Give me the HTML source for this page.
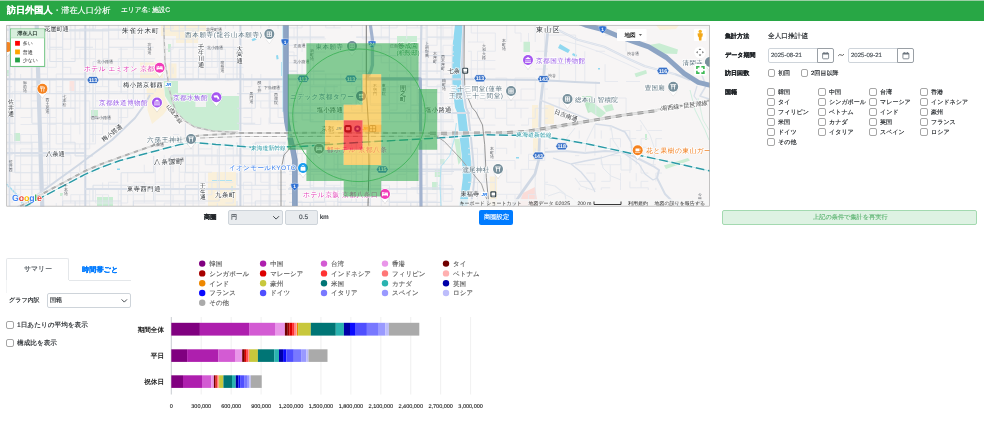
<!DOCTYPE html>
<html lang="ja"><head><meta charset="utf-8"><title>訪日外国人・滞在人口分析</title>
<style>
html,body{margin:0;padding:0;background:#fff;}
body{text-rendering:geometricPrecision;width:984px;height:440px;overflow:hidden;position:relative;font-family:"Liberation Sans",sans-serif;color:#212529;}
.a{position:absolute;white-space:nowrap;will-change:transform;-webkit-text-stroke:0.15px currentColor;}
.cb{position:absolute;width:7.5px;height:7.5px;box-sizing:border-box;border:1px solid #a6a6a6;border-radius:2px;background:#fff;}
.box{position:absolute;box-sizing:border-box;}
svg{position:absolute;left:0;top:0;will-change:transform;}
svg text{font-family:"Liberation Sans",sans-serif;}
</style></head>
<body>
<div class="box" style="left:0;top:0;width:984px;height:20.5px;background:#28a745;"></div>
<div class="box" style="left:0;top:0;width:984px;height:1px;background:#9ccfa6;"></div>
<div class="a" style="left:6.60px;top:6.30px;font-size:9.1px;line-height:9.1px;color:#fff;font-weight:bold;">訪日外国人</div>
<div class="a" style="left:52.50px;top:6.95px;font-size:8.2px;line-height:8.2px;color:#fff;font-weight:normal;">・滞在人口分析</div>
<div class="a" style="left:121.00px;top:7.90px;font-size:6.7px;line-height:6.7px;color:#fff;font-weight:normal;">エリア名: 施設C</div>
<svg width="984" height="440" viewBox="0 0 984 440">
<defs><clipPath id="mc"><rect x="6.5" y="25" width="703.2" height="181.4"/></clipPath></defs>
<g clip-path="url(#mc)">
<rect x="6.5" y="25" width="703.2" height="181.4" fill="#f7f5f5"/>
<path d="M161.0 25.0 L206.0 25.0 L206.0 34.0 L198.0 34.0 L198.0 43.0 L176.0 43.0 L176.0 36.0 L161.0 36.0Z" fill="#faf0da" />
<path d="M140.0 62.5 L163.0 62.5 L163.0 78.0 L140.0 78.0Z" fill="#faf0da" />
<path d="M168.6 63.4 L176.5 63.4 L176.5 78.5 L168.6 78.5Z" fill="#faf0da" />
<path d="M146.5 88.0 L163.7 88.0 L165.0 98.0 L169.0 107.0 L163.0 115.0 L152.0 124.0 L147.5 110.0Z" fill="#faf0da" />
<path d="M208.0 172.0 L236.0 172.0 L236.0 206.0 L208.0 206.0Z" fill="#faf0da" />
<path d="M544.0 105.0 L554.0 105.0 L554.0 124.0 L544.0 124.0Z" fill="#faf0da" />
<path d="M532.0 105.0 L538.0 105.0 L538.0 132.0 L532.0 132.0Z" fill="#faf0da" />
<path d="M533.0 136.0 L538.0 136.0 L538.0 160.0 L533.0 160.0Z" fill="#faf0da" />
<path d="M489.7 176.6 L497.0 176.6 L497.0 206.0 L489.7 206.0Z" fill="#faf0da" />
<path d="M656.0 25.0 L679.0 25.0 L676.0 29.0 L660.0 30.0Z" fill="#faf0da" />
<path d="M523.0 193.0 L535.0 187.0 L538.0 206.0 L518.0 206.0Z" fill="#fbdcd8" />
<rect x="69.5" y="81" width="5.0" height="10.0" fill="#fbe3df"/>
<path d="M163.7 81.0 L178.0 81.0 L178.0 93.0 L222.0 93.0 L222.0 96.0 L239.0 96.0 L239.0 130.0 L215.0 131.0 L195.0 127.0 L182.0 118.0 L176.0 112.0 L170.0 104.0 L165.0 96.0Z" fill="#c9edd3" />
<rect x="195.4" y="100" width="10.6" height="7.0" fill="#f1f3f1"/>
<path d="M397.0 36.0 L417.0 36.0 L417.0 50.0 L397.0 50.0Z" fill="#c9edd3" />
<path d="M523.5 41.7 L530.0 41.7 L530.0 52.0 L523.5 52.0Z" fill="#c9edd3" />
<path d="M648.7 45.0 L659.3 43.3 L678.0 49.5 L677.0 54.0 L663.0 53.6 L652.0 50.0Z" fill="#c9edd3" />
<path d="M634.5 73.4 L646.0 69.9 L647.0 73.4 L636.0 77.3Z" fill="#c9edd3" />
<path d="M582.0 96.0 L592.0 96.0 L597.0 110.0 L588.0 113.0Z" fill="#bfe8c8" />
<path d="M591.0 101.0 L606.0 113.0 L600.0 118.0 L588.0 110.0Z" fill="#c9edd3" />
<path d="M663.9 165.5 L688.0 157.9 L690.0 160.5 L666.0 169.0Z" fill="#c9edd3" />
<path d="M603.0 106.0 L612.0 104.0 L614.0 110.0 L606.0 112.0Z" fill="#c9edd3" />
<rect x="14" y="133" width="6.0" height="8.0" fill="#c9edd3"/>
<rect x="91" y="110" width="7.0" height="6.0" fill="#c9edd3"/>
<rect x="97" y="197" width="16.0" height="9.0" fill="#c9edd3"/>
<rect x="434.8" y="169.5" width="6.2" height="7.5" fill="#c9edd3"/>
<path d="M454.0 139.0 L459.6 139.0 L461.6 160.0 L458.5 165.0 L456.0 150.0Z" fill="#c9edd3" />
<rect x="432" y="182" width="6.0" height="8.0" fill="#c9edd3"/>
<rect x="7" y="70" width="3.0" height="6.0" fill="#c9edd3"/>
<rect x="168" y="44" width="3.0" height="8.0" fill="#c9edd3"/>
<rect x="60" y="193" width="3.0" height="3.0" fill="#c9edd3"/>
<rect x="645" y="134" width="2.0" height="6.0" fill="#c9edd3"/>
<rect x="440" y="159" width="4.4" height="5.4" fill="#c9edd3"/>
<path d="M455.0 25.0 L452.8 43.4 L451.8 64.7 L452.2 86.0 L455.0 107.5 L457.0 112.0 L459.2 133.8 L461.8 155.6 L462.9 177.5 L460.7 195.0 L459.2 206.0 L467.3 206.0 L468.4 195.0 L472.3 177.5 L470.5 155.6 L468.4 133.8 L465.7 112.0 L464.0 107.5 L461.4 86.0 L460.3 64.7 L461.4 43.4 L462.4 25.0Z" fill="#90d8f0" />
<path d="M6.5 184.0 L19.5 197.5 L24.0 207.0" fill="none" stroke="#9adcf2" stroke-width="1.6" stroke-linejoin="round" />
<path d="M251.5 39.2 L255.5 37.6 L256.5 39.8 L252.5 41.2Z" fill="#90d8f0" />
<path d="M276.0 55.5 L278.0 55.0 L278.6 59.0 L276.6 59.6Z" fill="#90d8f0" />
<path d="M281.5 62.0 L281.5 76.0" fill="none" stroke="#a5e0f3" stroke-width="0.8" stroke-linejoin="round" />
<path d="M560.0 44.0 L570.0 50.0 L568.0 53.0 L558.0 48.0Z" fill="#90d8f0" />
<path d="M573.0 53.0 L577.0 55.0 L576.0 57.0 L572.0 55.0Z" fill="#90d8f0" />
<rect x="117" y="168.5" width="3.0" height="1.5" fill="#90d8f0"/>
<rect x="516" y="157" width="3.0" height="1.5" fill="#90d8f0"/>
<rect x="598" y="68" width="2.0" height="1.5" fill="#90d8f0"/>
<path d="M212.0 180.5 L232.0 180.5" fill="none" stroke="#a5e0f3" stroke-width="0.9" stroke-linejoin="round" />
<path d="M232.0 186.0 L232.0 196.0 L228.0 196.0" fill="none" stroke="#a5e0f3" stroke-width="0.8" stroke-linejoin="round" />
<path d="M12.1 91.9L12.1 100.9M12.1 108.0L12.1 117.5M12.1 117.5L12.1 124.5M12.1 134.5L12.1 143.9M12.1 148.9L12.1 154.9M12.1 164.7L12.1 172.2M12.1 189.4L12.1 194.7M12.1 194.7L12.1 203.0M20.6 25.0L20.6 28.8M20.6 74.0L20.6 80.1M20.6 91.9L20.6 100.9M20.6 100.9L20.6 108.0M20.6 134.5L20.6 143.9M20.6 148.9L20.6 154.9M20.6 154.9L20.6 164.7M20.6 164.7L20.6 172.2M20.6 172.2L20.6 182.3M20.6 182.3L20.6 189.4M20.6 189.4L20.6 194.7M20.6 194.7L20.6 203.0M31.2 67.4L31.2 74.0M31.2 74.0L31.2 80.1M31.2 86.6L31.2 91.9M31.2 91.9L31.2 100.9M31.2 100.9L31.2 108.0M31.2 108.0L31.2 117.5M31.2 134.5L31.2 143.9M31.2 148.9L31.2 154.9M31.2 164.7L31.2 172.2M31.2 172.2L31.2 182.3M39.2 67.4L39.2 74.0M39.2 91.9L39.2 100.9M39.2 117.5L39.2 124.5M39.2 124.5L39.2 134.5M39.2 143.9L39.2 148.9M39.2 148.9L39.2 154.9M39.2 154.9L39.2 164.7M39.2 164.7L39.2 172.2M39.2 172.2L39.2 182.3M39.2 182.3L39.2 189.4M47.5 25.0L47.5 28.8M47.5 28.8L47.5 39.0M47.5 39.0L47.5 49.2M47.5 58.7L47.5 67.4M47.5 67.4L47.5 74.0M47.5 74.0L47.5 80.1M47.5 86.6L47.5 91.9M47.5 100.9L47.5 108.0M47.5 108.0L47.5 117.5M47.5 117.5L47.5 124.5M47.5 124.5L47.5 134.5M47.5 134.5L47.5 143.9M47.5 143.9L47.5 148.9M47.5 148.9L47.5 154.9M47.5 154.9L47.5 164.7M47.5 164.7L47.5 172.2M47.5 172.2L47.5 182.3M47.5 182.3L47.5 189.4M56.2 25.0L56.2 28.8M56.2 28.8L56.2 39.0M56.2 39.0L56.2 49.2M56.2 49.2L56.2 58.7M56.2 58.7L56.2 67.4M56.2 74.0L56.2 80.1M56.2 80.1L56.2 86.6M56.2 86.6L56.2 91.9M56.2 91.9L56.2 100.9M56.2 100.9L56.2 108.0M56.2 108.0L56.2 117.5M56.2 117.5L56.2 124.5M56.2 124.5L56.2 134.5M56.2 134.5L56.2 143.9M56.2 148.9L56.2 154.9M56.2 164.7L56.2 172.2M56.2 172.2L56.2 182.3M56.2 203.0L56.2 206.0M62.6 25.0L62.6 28.8M62.6 58.7L62.6 67.4M62.6 80.1L62.6 86.6M62.6 86.6L62.6 91.9M62.6 91.9L62.6 100.9M62.6 100.9L62.6 108.0M62.6 108.0L62.6 117.5M62.6 117.5L62.6 124.5M62.6 134.5L62.6 143.9M62.6 143.9L62.6 148.9M62.6 148.9L62.6 154.9M62.6 154.9L62.6 164.7M62.6 164.7L62.6 172.2M62.6 172.2L62.6 182.3M62.6 194.7L62.6 203.0M62.6 203.0L62.6 206.0M70.8 25.0L70.8 28.8M70.8 28.8L70.8 39.0M70.8 39.0L70.8 49.2M70.8 67.4L70.8 74.0M70.8 86.6L70.8 91.9M70.8 91.9L70.8 100.9M70.8 100.9L70.8 108.0M70.8 117.5L70.8 124.5M70.8 124.5L70.8 134.5M70.8 134.5L70.8 143.9M70.8 154.9L70.8 164.7M70.8 172.2L70.8 182.3M70.8 194.7L70.8 203.0M79.8 28.8L79.8 39.0M79.8 49.2L79.8 58.7M79.8 80.1L79.8 86.6M79.8 86.6L79.8 91.9M79.8 91.9L79.8 100.9M79.8 100.9L79.8 108.0M79.8 108.0L79.8 117.5M79.8 117.5L79.8 124.5M79.8 124.5L79.8 134.5M79.8 143.9L79.8 148.9M79.8 164.7L79.8 172.2M79.8 194.7L79.8 203.0M79.8 203.0L79.8 206.0M89.7 25.0L89.7 28.8M89.7 28.8L89.7 39.0M89.7 39.0L89.7 49.2M89.7 49.2L89.7 58.7M89.7 58.7L89.7 67.4M89.7 67.4L89.7 74.0M89.7 80.1L89.7 86.6M89.7 86.6L89.7 91.9M89.7 100.9L89.7 108.0M89.7 108.0L89.7 117.5M89.7 117.5L89.7 124.5M89.7 124.5L89.7 134.5M89.7 134.5L89.7 143.9M89.7 143.9L89.7 148.9M89.7 189.4L89.7 194.7M89.7 194.7L89.7 203.0M89.7 203.0L89.7 206.0M95.5 25.0L95.5 28.8M95.5 39.0L95.5 49.2M95.5 49.2L95.5 58.7M95.5 58.7L95.5 67.4M95.5 67.4L95.5 74.0M95.5 74.0L95.5 80.1M95.5 80.1L95.5 86.6M95.5 86.6L95.5 91.9M95.5 91.9L95.5 100.9M95.5 100.9L95.5 108.0M95.5 117.5L95.5 124.5M95.5 124.5L95.5 134.5M95.5 134.5L95.5 143.9M95.5 189.4L95.5 194.7M95.5 194.7L95.5 203.0M102.6 28.8L102.6 39.0M102.6 39.0L102.6 49.2M102.6 49.2L102.6 58.7M102.6 58.7L102.6 67.4M102.6 67.4L102.6 74.0M102.6 74.0L102.6 80.1M102.6 80.1L102.6 86.6M102.6 100.9L102.6 108.0M102.6 117.5L102.6 124.5M102.6 124.5L102.6 134.5M102.6 182.3L102.6 189.4M102.6 194.7L102.6 203.0M102.6 203.0L102.6 206.0M108.5 25.0L108.5 28.8M108.5 28.8L108.5 39.0M108.5 49.2L108.5 58.7M108.5 58.7L108.5 67.4M108.5 67.4L108.5 74.0M108.5 80.1L108.5 86.6M108.5 86.6L108.5 91.9M108.5 91.9L108.5 100.9M108.5 100.9L108.5 108.0M108.5 108.0L108.5 117.5M108.5 117.5L108.5 124.5M108.5 124.5L108.5 134.5M108.5 182.3L108.5 189.4M108.5 194.7L108.5 203.0M108.5 203.0L108.5 206.0M118.4 25.0L118.4 28.8M118.4 28.8L118.4 39.0M118.4 58.7L118.4 67.4M118.4 67.4L118.4 74.0M118.4 80.1L118.4 86.6M118.4 108.0L118.4 117.5M118.4 117.5L118.4 124.5M118.4 189.4L118.4 194.7M118.4 194.7L118.4 203.0M118.4 203.0L118.4 206.0M127.7 25.0L127.7 28.8M127.7 28.8L127.7 39.0M127.7 58.7L127.7 67.4M127.7 67.4L127.7 74.0M127.7 74.0L127.7 80.1M127.7 80.1L127.7 86.6M127.7 86.6L127.7 91.9M127.7 91.9L127.7 100.9M127.7 108.0L127.7 117.5M127.7 172.2L127.7 182.3M127.7 194.7L127.7 203.0M133.3 28.8L133.3 39.0M133.3 39.0L133.3 49.2M133.3 49.2L133.3 58.7M133.3 67.4L133.3 74.0M133.3 74.0L133.3 80.1M133.3 91.9L133.3 100.9M133.3 100.9L133.3 108.0M133.3 189.4L133.3 194.7M133.3 194.7L133.3 203.0M133.3 203.0L133.3 206.0M144.3 49.2L144.3 58.7M144.3 58.7L144.3 67.4M144.3 67.4L144.3 74.0M144.3 86.6L144.3 91.9M144.3 91.9L144.3 100.9M144.3 164.7L144.3 172.2M144.3 182.3L144.3 189.4M144.3 189.4L144.3 194.7M144.3 194.7L144.3 203.0M155.2 80.1L155.2 86.6M155.2 86.6L155.2 91.9M155.2 164.7L155.2 172.2M155.2 172.2L155.2 182.3M155.2 182.3L155.2 189.4M155.2 189.4L155.2 194.7M155.2 194.7L155.2 203.0M155.2 203.0L155.2 206.0M164.2 25.0L164.2 28.8M164.2 28.8L164.2 39.0M164.2 49.2L164.2 58.7M164.2 58.7L164.2 67.4M164.2 74.0L164.2 80.1M164.2 154.9L164.2 164.7M164.2 164.7L164.2 172.2M164.2 172.2L164.2 182.3M164.2 182.3L164.2 189.4M164.2 189.4L164.2 194.7M164.2 203.0L164.2 206.0M173.1 25.0L173.1 28.8M173.1 39.0L173.1 49.2M173.1 67.4L173.1 74.0M173.1 154.9L173.1 164.7M173.1 164.7L173.1 172.2M173.1 182.3L173.1 189.4M173.1 194.7L173.1 203.0M179.3 25.0L179.3 28.8M179.3 28.8L179.3 39.0M179.3 49.2L179.3 58.7M179.3 58.7L179.3 67.4M179.3 67.4L179.3 74.0M179.3 74.0L179.3 80.1M179.3 164.7L179.3 172.2M179.3 172.2L179.3 182.3M179.3 182.3L179.3 189.4M179.3 189.4L179.3 194.7M179.3 203.0L179.3 206.0M184.8 25.0L184.8 28.8M184.8 39.0L184.8 49.2M184.8 49.2L184.8 58.7M184.8 58.7L184.8 67.4M184.8 67.4L184.8 74.0M184.8 148.9L184.8 154.9M184.8 172.2L184.8 182.3M184.8 189.4L184.8 194.7M184.8 194.7L184.8 203.0M184.8 203.0L184.8 206.0M193.1 28.8L193.1 39.0M193.1 39.0L193.1 49.2M193.1 49.2L193.1 58.7M193.1 58.7L193.1 67.4M193.1 67.4L193.1 74.0M193.1 74.0L193.1 80.1M193.1 143.9L193.1 148.9M193.1 148.9L193.1 154.9M193.1 154.9L193.1 164.7M193.1 164.7L193.1 172.2M193.1 172.2L193.1 182.3M193.1 194.7L193.1 203.0M193.1 203.0L193.1 206.0M198.8 25.0L198.8 28.8M198.8 58.7L198.8 67.4M198.8 67.4L198.8 74.0M198.8 148.9L198.8 154.9M198.8 154.9L198.8 164.7M198.8 164.7L198.8 172.2M198.8 189.4L198.8 194.7M198.8 194.7L198.8 203.0M198.8 203.0L198.8 206.0M205.2 49.2L205.2 58.7M205.2 58.7L205.2 67.4M205.2 67.4L205.2 74.0M205.2 74.0L205.2 80.1M205.2 154.9L205.2 164.7M205.2 172.2L205.2 182.3M211.9 25.0L211.9 28.8M211.9 49.2L211.9 58.7M211.9 58.7L211.9 67.4M211.9 143.9L211.9 148.9M211.9 148.9L211.9 154.9M211.9 154.9L211.9 164.7M211.9 182.3L211.9 189.4M211.9 189.4L211.9 194.7M217.4 25.0L217.4 28.8M217.4 39.0L217.4 49.2M217.4 49.2L217.4 58.7M217.4 58.7L217.4 67.4M217.4 74.0L217.4 80.1M217.4 148.9L217.4 154.9M217.4 154.9L217.4 164.7M217.4 172.2L217.4 182.3M217.4 182.3L217.4 189.4M217.4 189.4L217.4 194.7M217.4 203.0L217.4 206.0M225.4 25.0L225.4 28.8M225.4 49.2L225.4 58.7M225.4 58.7L225.4 67.4M225.4 74.0L225.4 80.1M225.4 143.9L225.4 148.9M225.4 148.9L225.4 154.9M225.4 154.9L225.4 164.7M225.4 164.7L225.4 172.2M225.4 172.2L225.4 182.3M233.3 25.0L233.3 28.8M233.3 39.0L233.3 49.2M233.3 49.2L233.3 58.7M233.3 58.7L233.3 67.4M233.3 67.4L233.3 74.0M233.3 74.0L233.3 80.1M233.3 143.9L233.3 148.9M233.3 148.9L233.3 154.9M233.3 154.9L233.3 164.7M233.3 194.7L233.3 203.0M243.4 74.0L243.4 80.1M243.4 80.1L243.4 86.6M243.4 86.6L243.4 91.9M243.4 143.9L243.4 148.9M243.4 182.3L243.4 189.4M243.4 194.7L243.4 203.0M243.4 203.0L243.4 206.0M251.8 25.0L251.8 28.8M251.8 74.0L251.8 80.1M251.8 80.1L251.8 86.6M251.8 100.9L251.8 108.0M251.8 108.0L251.8 117.5M251.8 117.5L251.8 124.5M251.8 148.9L251.8 154.9M251.8 154.9L251.8 164.7M251.8 182.3L251.8 189.4M251.8 189.4L251.8 194.7M251.8 194.7L251.8 203.0M251.8 203.0L251.8 206.0M260.8 25.0L260.8 28.8M260.8 74.0L260.8 80.1M260.8 80.1L260.8 86.6M260.8 86.6L260.8 91.9M260.8 100.9L260.8 108.0M260.8 117.5L260.8 124.5M260.8 143.9L260.8 148.9M260.8 148.9L260.8 154.9M260.8 172.2L260.8 182.3M260.8 189.4L260.8 194.7M260.8 194.7L260.8 203.0M260.8 203.0L260.8 206.0M269.0 25.0L269.0 28.8M269.0 80.1L269.0 86.6M269.0 91.9L269.0 100.9M269.0 100.9L269.0 108.0M269.0 117.5L269.0 124.5M269.0 154.9L269.0 164.7M269.0 164.7L269.0 172.2M269.0 172.2L269.0 182.3M269.0 182.3L269.0 189.4M269.0 194.7L269.0 203.0M269.0 203.0L269.0 206.0M278.1 25.0L278.1 28.8M278.1 80.1L278.1 86.6M278.1 86.6L278.1 91.9M278.1 100.9L278.1 108.0M278.1 108.0L278.1 117.5M278.1 143.9L278.1 148.9M278.1 148.9L278.1 154.9M278.1 164.7L278.1 172.2M278.1 172.2L278.1 182.3M278.1 182.3L278.1 189.4M278.1 203.0L278.1 206.0M7.0 28.8L12.1 28.8M47.5 28.8L56.2 28.8M79.8 28.8L89.7 28.8M89.7 28.8L95.5 28.8M102.6 28.8L108.5 28.8M108.5 28.8L118.4 28.8M118.4 28.8L127.7 28.8M164.2 28.8L173.1 28.8M179.3 28.8L184.8 28.8M184.8 28.8L193.1 28.8M193.1 28.8L198.8 28.8M198.8 28.8L205.2 28.8M7.0 39.0L12.1 39.0M47.5 39.0L56.2 39.0M62.6 39.0L70.8 39.0M70.8 39.0L79.8 39.0M79.8 39.0L89.7 39.0M89.7 39.0L95.5 39.0M95.5 39.0L102.6 39.0M108.5 39.0L118.4 39.0M118.4 39.0L127.7 39.0M127.7 39.0L133.3 39.0M133.3 39.0L144.3 39.0M144.3 39.0L155.2 39.0M164.2 39.0L173.1 39.0M173.1 39.0L179.3 39.0M179.3 39.0L184.8 39.0M184.8 39.0L193.1 39.0M193.1 39.0L198.8 39.0M7.0 49.2L12.1 49.2M47.5 49.2L56.2 49.2M56.2 49.2L62.6 49.2M62.6 49.2L70.8 49.2M79.8 49.2L89.7 49.2M89.7 49.2L95.5 49.2M95.5 49.2L102.6 49.2M102.6 49.2L108.5 49.2M118.4 49.2L127.7 49.2M133.3 49.2L144.3 49.2M164.2 49.2L173.1 49.2M179.3 49.2L184.8 49.2M205.2 49.2L211.9 49.2M211.9 49.2L217.4 49.2M217.4 49.2L225.4 49.2M233.3 49.2L243.4 49.2M56.2 58.7L62.6 58.7M70.8 58.7L79.8 58.7M79.8 58.7L89.7 58.7M89.7 58.7L95.5 58.7M102.6 58.7L108.5 58.7M118.4 58.7L127.7 58.7M127.7 58.7L133.3 58.7M133.3 58.7L144.3 58.7M144.3 58.7L155.2 58.7M164.2 58.7L173.1 58.7M173.1 58.7L179.3 58.7M179.3 58.7L184.8 58.7M184.8 58.7L193.1 58.7M193.1 58.7L198.8 58.7M198.8 58.7L205.2 58.7M205.2 58.7L211.9 58.7M211.9 58.7L217.4 58.7M217.4 58.7L225.4 58.7M225.4 58.7L233.3 58.7M233.3 58.7L243.4 58.7M12.1 67.4L20.6 67.4M20.6 67.4L31.2 67.4M31.2 67.4L39.2 67.4M39.2 67.4L47.5 67.4M47.5 67.4L56.2 67.4M62.6 67.4L70.8 67.4M89.7 67.4L95.5 67.4M95.5 67.4L102.6 67.4M102.6 67.4L108.5 67.4M118.4 67.4L127.7 67.4M127.7 67.4L133.3 67.4M179.3 67.4L184.8 67.4M184.8 67.4L193.1 67.4M193.1 67.4L198.8 67.4M198.8 67.4L205.2 67.4M205.2 67.4L211.9 67.4M211.9 67.4L217.4 67.4M225.4 67.4L233.3 67.4M233.3 67.4L243.4 67.4M7.0 74.0L12.1 74.0M39.2 74.0L47.5 74.0M56.2 74.0L62.6 74.0M62.6 74.0L70.8 74.0M70.8 74.0L79.8 74.0M79.8 74.0L89.7 74.0M89.7 74.0L95.5 74.0M108.5 74.0L118.4 74.0M127.7 74.0L133.3 74.0M133.3 74.0L144.3 74.0M144.3 74.0L155.2 74.0M179.3 74.0L184.8 74.0M184.8 74.0L193.1 74.0M198.8 74.0L205.2 74.0M205.2 74.0L211.9 74.0M211.9 74.0L217.4 74.0M225.4 74.0L233.3 74.0M233.3 74.0L243.4 74.0M12.1 80.1L20.6 80.1M31.2 80.1L39.2 80.1M39.2 80.1L47.5 80.1M47.5 80.1L56.2 80.1M62.6 80.1L70.8 80.1M70.8 80.1L79.8 80.1M79.8 80.1L89.7 80.1M108.5 80.1L118.4 80.1M144.3 80.1L155.2 80.1M155.2 80.1L164.2 80.1M173.1 80.1L179.3 80.1M179.3 80.1L184.8 80.1M184.8 80.1L193.1 80.1M205.2 80.1L211.9 80.1M211.9 80.1L217.4 80.1M225.4 80.1L233.3 80.1M243.4 80.1L251.8 80.1M251.8 80.1L260.8 80.1M260.8 80.1L269.0 80.1M269.0 80.1L278.1 80.1M7.0 86.6L12.1 86.6M31.2 86.6L39.2 86.6M56.2 86.6L62.6 86.6M79.8 86.6L89.7 86.6M95.5 86.6L102.6 86.6M102.6 86.6L108.5 86.6M118.4 86.6L127.7 86.6M127.7 86.6L133.3 86.6M133.3 86.6L144.3 86.6M144.3 86.6L155.2 86.6M155.2 86.6L164.2 86.6M243.4 86.6L251.8 86.6M260.8 86.6L269.0 86.6M278.1 86.6L286.0 86.6M12.1 91.9L20.6 91.9M20.6 91.9L31.2 91.9M31.2 91.9L39.2 91.9M39.2 91.9L47.5 91.9M56.2 91.9L62.6 91.9M70.8 91.9L79.8 91.9M79.8 91.9L89.7 91.9M95.5 91.9L102.6 91.9M102.6 91.9L108.5 91.9M108.5 91.9L118.4 91.9M118.4 91.9L127.7 91.9M269.0 91.9L278.1 91.9M278.1 91.9L286.0 91.9M12.1 100.9L20.6 100.9M31.2 100.9L39.2 100.9M62.6 100.9L70.8 100.9M70.8 100.9L79.8 100.9M79.8 100.9L89.7 100.9M95.5 100.9L102.6 100.9M102.6 100.9L108.5 100.9M118.4 100.9L127.7 100.9M133.3 100.9L144.3 100.9M251.8 100.9L260.8 100.9M260.8 100.9L269.0 100.9M269.0 100.9L278.1 100.9M12.1 108.0L20.6 108.0M31.2 108.0L39.2 108.0M39.2 108.0L47.5 108.0M47.5 108.0L56.2 108.0M56.2 108.0L62.6 108.0M62.6 108.0L70.8 108.0M70.8 108.0L79.8 108.0M89.7 108.0L95.5 108.0M95.5 108.0L102.6 108.0M108.5 108.0L118.4 108.0M118.4 108.0L127.7 108.0M127.7 108.0L133.3 108.0M243.4 108.0L251.8 108.0M260.8 108.0L269.0 108.0M269.0 108.0L278.1 108.0M278.1 108.0L286.0 108.0M7.0 117.5L12.1 117.5M20.6 117.5L31.2 117.5M39.2 117.5L47.5 117.5M47.5 117.5L56.2 117.5M89.7 117.5L95.5 117.5M95.5 117.5L102.6 117.5M102.6 117.5L108.5 117.5M118.4 117.5L127.7 117.5M243.4 117.5L251.8 117.5M278.1 117.5L286.0 117.5M20.6 124.5L31.2 124.5M31.2 124.5L39.2 124.5M47.5 124.5L56.2 124.5M62.6 124.5L70.8 124.5M70.8 124.5L79.8 124.5M102.6 124.5L108.5 124.5M108.5 124.5L118.4 124.5M243.4 124.5L251.8 124.5M251.8 124.5L260.8 124.5M7.0 134.5L12.1 134.5M20.6 134.5L31.2 134.5M31.2 134.5L39.2 134.5M47.5 134.5L56.2 134.5M56.2 134.5L62.6 134.5M62.6 134.5L70.8 134.5M89.7 134.5L95.5 134.5M95.5 134.5L102.6 134.5M173.1 134.5L179.3 134.5M7.0 143.9L12.1 143.9M12.1 143.9L20.6 143.9M20.6 143.9L31.2 143.9M39.2 143.9L47.5 143.9M56.2 143.9L62.6 143.9M62.6 143.9L70.8 143.9M70.8 143.9L79.8 143.9M79.8 143.9L89.7 143.9M89.7 143.9L95.5 143.9M211.9 143.9L217.4 143.9M217.4 143.9L225.4 143.9M251.8 143.9L260.8 143.9M278.1 143.9L286.0 143.9M7.0 148.9L12.1 148.9M20.6 148.9L31.2 148.9M31.2 148.9L39.2 148.9M39.2 148.9L47.5 148.9M47.5 148.9L56.2 148.9M56.2 148.9L62.6 148.9M62.6 148.9L70.8 148.9M70.8 148.9L79.8 148.9M79.8 148.9L89.7 148.9M184.8 148.9L193.1 148.9M198.8 148.9L205.2 148.9M205.2 148.9L211.9 148.9M225.4 148.9L233.3 148.9M243.4 148.9L251.8 148.9M7.0 154.9L12.1 154.9M20.6 154.9L31.2 154.9M31.2 154.9L39.2 154.9M39.2 154.9L47.5 154.9M56.2 154.9L62.6 154.9M62.6 154.9L70.8 154.9M173.1 154.9L179.3 154.9M179.3 154.9L184.8 154.9M184.8 154.9L193.1 154.9M193.1 154.9L198.8 154.9M198.8 154.9L205.2 154.9M205.2 154.9L211.9 154.9M211.9 154.9L217.4 154.9M225.4 154.9L233.3 154.9M233.3 154.9L243.4 154.9M269.0 154.9L278.1 154.9M278.1 154.9L286.0 154.9M7.0 164.7L12.1 164.7M20.6 164.7L31.2 164.7M31.2 164.7L39.2 164.7M39.2 164.7L47.5 164.7M47.5 164.7L56.2 164.7M56.2 164.7L62.6 164.7M62.6 164.7L70.8 164.7M79.8 164.7L89.7 164.7M155.2 164.7L164.2 164.7M164.2 164.7L173.1 164.7M173.1 164.7L179.3 164.7M184.8 164.7L193.1 164.7M193.1 164.7L198.8 164.7M205.2 164.7L211.9 164.7M211.9 164.7L217.4 164.7M217.4 164.7L225.4 164.7M225.4 164.7L233.3 164.7M233.3 164.7L243.4 164.7M243.4 164.7L251.8 164.7M251.8 164.7L260.8 164.7M260.8 164.7L269.0 164.7M12.1 172.2L20.6 172.2M31.2 172.2L39.2 172.2M47.5 172.2L56.2 172.2M62.6 172.2L70.8 172.2M79.8 172.2L89.7 172.2M144.3 172.2L155.2 172.2M179.3 172.2L184.8 172.2M184.8 172.2L193.1 172.2M198.8 172.2L205.2 172.2M205.2 172.2L211.9 172.2M243.4 172.2L251.8 172.2M251.8 172.2L260.8 172.2M260.8 172.2L269.0 172.2M278.1 172.2L286.0 172.2M7.0 182.3L12.1 182.3M12.1 182.3L20.6 182.3M20.6 182.3L31.2 182.3M31.2 182.3L39.2 182.3M39.2 182.3L47.5 182.3M108.5 182.3L118.4 182.3M133.3 182.3L144.3 182.3M155.2 182.3L164.2 182.3M164.2 182.3L173.1 182.3M173.1 182.3L179.3 182.3M179.3 182.3L184.8 182.3M184.8 182.3L193.1 182.3M193.1 182.3L198.8 182.3M198.8 182.3L205.2 182.3M205.2 182.3L211.9 182.3M211.9 182.3L217.4 182.3M225.4 182.3L233.3 182.3M243.4 182.3L251.8 182.3M260.8 182.3L269.0 182.3M278.1 182.3L286.0 182.3M12.1 189.4L20.6 189.4M20.6 189.4L31.2 189.4M31.2 189.4L39.2 189.4M39.2 189.4L47.5 189.4M89.7 189.4L95.5 189.4M102.6 189.4L108.5 189.4M108.5 189.4L118.4 189.4M127.7 189.4L133.3 189.4M133.3 189.4L144.3 189.4M144.3 189.4L155.2 189.4M179.3 189.4L184.8 189.4M184.8 189.4L193.1 189.4M198.8 189.4L205.2 189.4M205.2 189.4L211.9 189.4M217.4 189.4L225.4 189.4M225.4 189.4L233.3 189.4M243.4 189.4L251.8 189.4M251.8 189.4L260.8 189.4M260.8 189.4L269.0 189.4M278.1 189.4L286.0 189.4M7.0 194.7L12.1 194.7M12.1 194.7L20.6 194.7M70.8 194.7L79.8 194.7M79.8 194.7L89.7 194.7M95.5 194.7L102.6 194.7M102.6 194.7L108.5 194.7M118.4 194.7L127.7 194.7M127.7 194.7L133.3 194.7M133.3 194.7L144.3 194.7M155.2 194.7L164.2 194.7M164.2 194.7L173.1 194.7M173.1 194.7L179.3 194.7M179.3 194.7L184.8 194.7M184.8 194.7L193.1 194.7M193.1 194.7L198.8 194.7M205.2 194.7L211.9 194.7M217.4 194.7L225.4 194.7M243.4 194.7L251.8 194.7M260.8 194.7L269.0 194.7M269.0 194.7L278.1 194.7M278.1 194.7L286.0 194.7M62.6 203.0L70.8 203.0M70.8 203.0L79.8 203.0M79.8 203.0L89.7 203.0M95.5 203.0L102.6 203.0M102.6 203.0L108.5 203.0M108.5 203.0L118.4 203.0M118.4 203.0L127.7 203.0M133.3 203.0L144.3 203.0M144.3 203.0L155.2 203.0M164.2 203.0L173.1 203.0M173.1 203.0L179.3 203.0M179.3 203.0L184.8 203.0M184.8 203.0L193.1 203.0M193.1 203.0L198.8 203.0M198.8 203.0L205.2 203.0M225.4 203.0L233.3 203.0M243.4 203.0L251.8 203.0M251.8 203.0L260.8 203.0M260.8 203.0L269.0 203.0M269.0 203.0L278.1 203.0" fill="none" stroke="#e4e8ee" stroke-width="0.9"/>
<path d="M14.9 61.5L14.9 79.4M14.9 79.4L14.9 93.6M14.9 93.6L14.9 108.2M14.9 108.2L14.9 123.3M14.9 123.3L14.9 142.2M14.9 142.2L14.9 155.9M14.9 155.9L14.9 172.7M14.9 185.3L14.9 201.0M31.9 61.5L31.9 79.4M31.9 79.4L31.9 93.6M31.9 108.2L31.9 123.3M31.9 142.2L31.9 155.9M31.9 155.9L31.9 172.7M31.9 172.7L31.9 185.3M31.9 185.3L31.9 201.0M49.8 25.0L49.8 31.0M49.8 31.0L49.8 47.2M49.8 47.2L49.8 61.5M49.8 79.4L49.8 93.6M49.8 108.2L49.8 123.3M49.8 123.3L49.8 142.2M49.8 142.2L49.8 155.9M49.8 155.9L49.8 172.7M49.8 172.7L49.8 185.3M62.7 31.0L62.7 47.2M62.7 47.2L62.7 61.5M62.7 61.5L62.7 79.4M62.7 79.4L62.7 93.6M62.7 93.6L62.7 108.2M62.7 108.2L62.7 123.3M62.7 123.3L62.7 142.2M62.7 142.2L62.7 155.9M62.7 155.9L62.7 172.7M62.7 172.7L62.7 185.3M62.7 201.0L62.7 206.0M75.1 25.0L75.1 31.0M75.1 31.0L75.1 47.2M75.1 47.2L75.1 61.5M75.1 79.4L75.1 93.6M75.1 93.6L75.1 108.2M75.1 108.2L75.1 123.3M75.1 142.2L75.1 155.9M75.1 201.0L75.1 206.0M93.0 25.0L93.0 31.0M93.0 61.5L93.0 79.4M93.0 79.4L93.0 93.6M93.0 93.6L93.0 108.2M93.0 108.2L93.0 123.3M93.0 123.3L93.0 142.2M93.0 185.3L93.0 201.0M108.7 25.0L108.7 31.0M108.7 31.0L108.7 47.2M108.7 47.2L108.7 61.5M108.7 79.4L108.7 93.6M108.7 93.6L108.7 108.2M108.7 108.2L108.7 123.3M108.7 201.0L108.7 206.0M121.1 47.2L121.1 61.5M121.1 61.5L121.1 79.4M121.1 79.4L121.1 93.6M121.1 108.2L121.1 123.3M121.1 172.7L121.1 185.3M121.1 185.3L121.1 201.0M121.1 201.0L121.1 206.0M133.4 31.0L133.4 47.2M133.4 61.5L133.4 79.4M133.4 79.4L133.4 93.6M133.4 93.6L133.4 108.2M133.4 201.0L133.4 206.0M153.7 155.9L153.7 172.7M153.7 185.3L153.7 201.0M170.7 25.0L170.7 31.0M170.7 47.2L170.7 61.5M170.7 61.5L170.7 79.4M170.7 155.9L170.7 172.7M170.7 172.7L170.7 185.3M170.7 185.3L170.7 201.0M170.7 201.0L170.7 206.0M185.4 25.0L185.4 31.0M185.4 31.0L185.4 47.2M185.4 47.2L185.4 61.5M185.4 61.5L185.4 79.4M185.4 123.3L185.4 142.2M185.4 155.9L185.4 172.7M185.4 185.3L185.4 201.0M185.4 201.0L185.4 206.0M198.4 25.0L198.4 31.0M198.4 61.5L198.4 79.4M198.4 142.2L198.4 155.9M198.4 172.7L198.4 185.3M198.4 185.3L198.4 201.0M219.2 47.2L219.2 61.5M219.2 61.5L219.2 79.4M219.2 142.2L219.2 155.9M219.2 155.9L219.2 172.7M219.2 172.7L219.2 185.3M219.2 185.3L219.2 201.0M237.0 47.2L237.0 61.5M237.0 61.5L237.0 79.4M237.0 142.2L237.0 155.9M237.0 172.7L237.0 185.3M237.0 201.0L237.0 206.0M255.3 93.6L255.3 108.2M255.3 142.2L255.3 155.9M255.3 155.9L255.3 172.7M255.3 172.7L255.3 185.3M255.3 201.0L255.3 206.0M270.0 79.4L270.0 93.6M270.0 93.6L270.0 108.2M270.0 108.2L270.0 123.3M270.0 155.9L270.0 172.7M270.0 172.7L270.0 185.3M270.0 185.3L270.0 201.0M270.0 201.0L270.0 206.0M284.1 25.0L284.1 31.0M284.1 31.0L284.1 47.2M284.1 61.5L284.1 79.4M284.1 79.4L284.1 93.6M284.1 142.2L284.1 155.9M284.1 155.9L284.1 172.7M284.1 201.0L284.1 206.0M62.7 31.0L75.1 31.0M75.1 31.0L93.0 31.0M93.0 31.0L108.7 31.0M121.1 31.0L133.4 31.0M133.4 31.0L153.7 31.0M170.7 31.0L185.4 31.0M185.4 31.0L198.4 31.0M284.1 31.0L286.0 31.0M49.8 47.2L62.7 47.2M75.1 47.2L93.0 47.2M108.7 47.2L121.1 47.2M121.1 47.2L133.4 47.2M133.4 47.2L153.7 47.2M170.7 47.2L185.4 47.2M185.4 47.2L198.4 47.2M198.4 47.2L219.2 47.2M219.2 47.2L237.0 47.2M284.1 47.2L286.0 47.2M49.8 61.5L62.7 61.5M62.7 61.5L75.1 61.5M93.0 61.5L108.7 61.5M108.7 61.5L121.1 61.5M121.1 61.5L133.4 61.5M133.4 61.5L153.7 61.5M170.7 61.5L185.4 61.5M185.4 61.5L198.4 61.5M198.4 61.5L219.2 61.5M219.2 61.5L237.0 61.5M7.0 79.4L14.9 79.4M14.9 79.4L31.9 79.4M49.8 79.4L62.7 79.4M62.7 79.4L75.1 79.4M75.1 79.4L93.0 79.4M93.0 79.4L108.7 79.4M121.1 79.4L133.4 79.4M133.4 79.4L153.7 79.4M153.7 79.4L170.7 79.4M185.4 79.4L198.4 79.4M237.0 79.4L255.3 79.4M255.3 79.4L270.0 79.4M284.1 79.4L286.0 79.4M7.0 93.6L14.9 93.6M14.9 93.6L31.9 93.6M31.9 93.6L49.8 93.6M49.8 93.6L62.7 93.6M62.7 93.6L75.1 93.6M75.1 93.6L93.0 93.6M93.0 93.6L108.7 93.6M108.7 93.6L121.1 93.6M121.1 93.6L133.4 93.6M133.4 93.6L153.7 93.6M237.0 93.6L255.3 93.6M255.3 93.6L270.0 93.6M284.1 93.6L286.0 93.6M7.0 108.2L14.9 108.2M14.9 108.2L31.9 108.2M31.9 108.2L49.8 108.2M49.8 108.2L62.7 108.2M62.7 108.2L75.1 108.2M93.0 108.2L108.7 108.2M108.7 108.2L121.1 108.2M121.1 108.2L133.4 108.2M237.0 108.2L255.3 108.2M270.0 108.2L284.1 108.2M284.1 108.2L286.0 108.2M7.0 123.3L14.9 123.3M31.9 123.3L49.8 123.3M49.8 123.3L62.7 123.3M62.7 123.3L75.1 123.3M75.1 123.3L93.0 123.3M93.0 123.3L108.7 123.3M108.7 123.3L121.1 123.3M237.0 123.3L255.3 123.3M270.0 123.3L284.1 123.3M7.0 142.2L14.9 142.2M14.9 142.2L31.9 142.2M31.9 142.2L49.8 142.2M62.7 142.2L75.1 142.2M255.3 142.2L270.0 142.2M270.0 142.2L284.1 142.2M284.1 142.2L286.0 142.2M14.9 155.9L31.9 155.9M31.9 155.9L49.8 155.9M49.8 155.9L62.7 155.9M75.1 155.9L93.0 155.9M170.7 155.9L185.4 155.9M185.4 155.9L198.4 155.9M198.4 155.9L219.2 155.9M219.2 155.9L237.0 155.9M237.0 155.9L255.3 155.9M255.3 155.9L270.0 155.9M270.0 155.9L284.1 155.9M284.1 155.9L286.0 155.9M14.9 172.7L31.9 172.7M31.9 172.7L49.8 172.7M49.8 172.7L62.7 172.7M62.7 172.7L75.1 172.7M75.1 172.7L93.0 172.7M121.1 172.7L133.4 172.7M133.4 172.7L153.7 172.7M185.4 172.7L198.4 172.7M255.3 172.7L270.0 172.7M270.0 172.7L284.1 172.7M284.1 172.7L286.0 172.7M7.0 185.3L14.9 185.3M14.9 185.3L31.9 185.3M31.9 185.3L49.8 185.3M93.0 185.3L108.7 185.3M108.7 185.3L121.1 185.3M121.1 185.3L133.4 185.3M133.4 185.3L153.7 185.3M153.7 185.3L170.7 185.3M185.4 185.3L198.4 185.3M237.0 185.3L255.3 185.3M255.3 185.3L270.0 185.3M270.0 185.3L284.1 185.3M284.1 185.3L286.0 185.3M62.7 201.0L75.1 201.0M75.1 201.0L93.0 201.0M93.0 201.0L108.7 201.0M108.7 201.0L121.1 201.0M133.4 201.0L153.7 201.0M153.7 201.0L170.7 201.0M170.7 201.0L185.4 201.0M185.4 201.0L198.4 201.0M198.4 201.0L219.2 201.0M255.3 201.0L270.0 201.0M270.0 201.0L284.1 201.0M284.1 201.0L286.0 201.0" fill="none" stroke="#dde2ea" stroke-width="1.1"/>
<path d="M294.0 27.9L294.0 38.9M294.0 52.0L294.0 62.8M294.0 103.7L294.0 110.1M294.0 110.1L294.0 119.9M294.0 119.9L294.0 131.0M294.0 131.0L294.0 137.7M294.0 137.7L294.0 144.0M294.0 144.0L294.0 153.6M294.0 193.6L294.0 201.3M294.0 201.3L294.0 206.0M302.1 25.0L302.1 27.9M302.1 38.9L302.1 45.3M302.1 45.3L302.1 52.0M302.1 62.8L302.1 74.0M302.1 74.0L302.1 85.1M302.1 85.1L302.1 92.6M302.1 92.6L302.1 103.7M302.1 103.7L302.1 110.1M302.1 110.1L302.1 119.9M302.1 153.6L302.1 164.3M302.1 164.3L302.1 174.2M302.1 201.3L302.1 206.0M313.7 45.3L313.7 52.0M313.7 52.0L313.7 62.8M313.7 62.8L313.7 74.0M313.7 74.0L313.7 85.1M313.7 144.0L313.7 153.6M313.7 153.6L313.7 164.3M313.7 174.2L313.7 185.4M313.7 185.4L313.7 193.6M313.7 193.6L313.7 201.3M313.7 201.3L313.7 206.0M325.8 25.0L325.8 27.9M325.8 74.0L325.8 85.1M325.8 85.1L325.8 92.6M325.8 103.7L325.8 110.1M325.8 110.1L325.8 119.9M325.8 153.6L325.8 164.3M325.8 174.2L325.8 185.4M325.8 201.3L325.8 206.0M334.1 25.0L334.1 27.9M334.1 85.1L334.1 92.6M334.1 103.7L334.1 110.1M334.1 110.1L334.1 119.9M334.1 144.0L334.1 153.6M334.1 153.6L334.1 164.3M334.1 164.3L334.1 174.2M334.1 185.4L334.1 193.6M334.1 201.3L334.1 206.0M340.8 74.0L340.8 85.1M340.8 85.1L340.8 92.6M340.8 92.6L340.8 103.7M340.8 103.7L340.8 110.1M340.8 110.1L340.8 119.9M340.8 144.0L340.8 153.6M340.8 174.2L340.8 185.4M340.8 185.4L340.8 193.6M340.8 193.6L340.8 201.3M340.8 201.3L340.8 206.0M351.6 25.0L351.6 27.9M351.6 74.0L351.6 85.1M351.6 103.7L351.6 110.1M351.6 144.0L351.6 153.6M351.6 153.6L351.6 164.3M351.6 164.3L351.6 174.2M351.6 174.2L351.6 185.4M351.6 193.6L351.6 201.3M362.4 25.0L362.4 27.9M362.4 27.9L362.4 38.9M362.4 52.0L362.4 62.8M362.4 62.8L362.4 74.0M362.4 74.0L362.4 85.1M362.4 85.1L362.4 92.6M362.4 103.7L362.4 110.1M362.4 144.0L362.4 153.6M362.4 153.6L362.4 164.3M362.4 164.3L362.4 174.2M362.4 174.2L362.4 185.4M362.4 185.4L362.4 193.6M362.4 193.6L362.4 201.3M362.4 201.3L362.4 206.0M370.4 38.9L370.4 45.3M370.4 52.0L370.4 62.8M370.4 62.8L370.4 74.0M370.4 74.0L370.4 85.1M370.4 85.1L370.4 92.6M370.4 144.0L370.4 153.6M370.4 153.6L370.4 164.3M370.4 164.3L370.4 174.2M370.4 185.4L370.4 193.6M370.4 193.6L370.4 201.3M370.4 201.3L370.4 206.0M381.2 25.0L381.2 27.9M381.2 27.9L381.2 38.9M381.2 45.3L381.2 52.0M381.2 52.0L381.2 62.8M381.2 74.0L381.2 85.1M381.2 85.1L381.2 92.6M381.2 92.6L381.2 103.7M381.2 103.7L381.2 110.1M381.2 144.0L381.2 153.6M381.2 174.2L381.2 185.4M381.2 185.4L381.2 193.6M381.2 193.6L381.2 201.3M381.2 201.3L381.2 206.0M389.5 25.0L389.5 27.9M389.5 27.9L389.5 38.9M389.5 45.3L389.5 52.0M389.5 52.0L389.5 62.8M389.5 74.0L389.5 85.1M389.5 85.1L389.5 92.6M389.5 92.6L389.5 103.7M389.5 103.7L389.5 110.1M389.5 110.1L389.5 119.9M389.5 144.0L389.5 153.6M389.5 153.6L389.5 164.3M389.5 164.3L389.5 174.2M389.5 185.4L389.5 193.6M397.1 25.0L397.1 27.9M397.1 62.8L397.1 74.0M397.1 74.0L397.1 85.1M397.1 85.1L397.1 92.6M397.1 92.6L397.1 103.7M397.1 103.7L397.1 110.1M397.1 174.2L397.1 185.4M397.1 185.4L397.1 193.6M397.1 201.3L397.1 206.0M406.7 25.0L406.7 27.9M406.7 27.9L406.7 38.9M406.7 52.0L406.7 62.8M406.7 62.8L406.7 74.0M406.7 85.1L406.7 92.6M406.7 110.1L406.7 119.9M406.7 144.0L406.7 153.6M406.7 164.3L406.7 174.2M406.7 174.2L406.7 185.4M406.7 185.4L406.7 193.6M406.7 193.6L406.7 201.3M417.2 25.0L417.2 27.9M417.2 52.0L417.2 62.8M417.2 62.8L417.2 74.0M417.2 74.0L417.2 85.1M417.2 85.1L417.2 92.6M417.2 92.6L417.2 103.7M417.2 110.1L417.2 119.9M417.2 144.0L417.2 153.6M417.2 153.6L417.2 164.3M417.2 174.2L417.2 185.4M417.2 185.4L417.2 193.6M417.2 201.3L417.2 206.0M426.1 25.0L426.1 27.9M426.1 27.9L426.1 38.9M426.1 38.9L426.1 45.3M426.1 45.3L426.1 52.0M426.1 52.0L426.1 62.8M426.1 62.8L426.1 74.0M426.1 74.0L426.1 85.1M426.1 85.1L426.1 92.6M426.1 92.6L426.1 103.7M426.1 103.7L426.1 110.1M426.1 110.1L426.1 119.9M426.1 144.0L426.1 153.6M426.1 153.6L426.1 164.3M426.1 164.3L426.1 174.2M426.1 174.2L426.1 185.4M426.1 193.6L426.1 201.3M426.1 201.3L426.1 206.0M437.1 25.0L437.1 27.9M437.1 27.9L437.1 38.9M437.1 38.9L437.1 45.3M437.1 52.0L437.1 62.8M437.1 62.8L437.1 74.0M437.1 85.1L437.1 92.6M437.1 103.7L437.1 110.1M437.1 110.1L437.1 119.9M437.1 144.0L437.1 153.6M437.1 153.6L437.1 164.3M437.1 164.3L437.1 174.2M437.1 174.2L437.1 185.4M437.1 185.4L437.1 193.6M437.1 193.6L437.1 201.3M437.1 201.3L437.1 206.0M443.0 25.0L443.0 27.9M443.0 27.9L443.0 38.9M443.0 45.3L443.0 52.0M443.0 52.0L443.0 62.8M443.0 62.8L443.0 74.0M443.0 74.0L443.0 85.1M443.0 92.6L443.0 103.7M443.0 103.7L443.0 110.1M443.0 110.1L443.0 119.9M443.0 119.9L443.0 131.0M443.0 137.7L443.0 144.0M443.0 144.0L443.0 153.6M443.0 153.6L443.0 164.3M443.0 174.2L443.0 185.4M443.0 185.4L443.0 193.6M443.0 193.6L443.0 201.3M452.0 25.0L452.0 27.9M452.0 27.9L452.0 38.9M452.0 45.3L452.0 52.0M452.0 52.0L452.0 62.8M452.0 62.8L452.0 74.0M452.0 74.0L452.0 85.1M452.0 85.1L452.0 92.6M452.0 92.6L452.0 103.7M452.0 103.7L452.0 110.1M452.0 110.1L452.0 119.9M452.0 137.7L452.0 144.0M452.0 144.0L452.0 153.6M452.0 153.6L452.0 164.3M452.0 164.3L452.0 174.2M452.0 185.4L452.0 193.6M452.0 193.6L452.0 201.3M289.0 27.9L294.0 27.9M294.0 27.9L302.1 27.9M325.8 27.9L334.1 27.9M334.1 27.9L340.8 27.9M381.2 27.9L389.5 27.9M389.5 27.9L397.1 27.9M406.7 27.9L417.2 27.9M417.2 27.9L426.1 27.9M437.1 27.9L443.0 27.9M443.0 27.9L452.0 27.9M289.0 38.9L294.0 38.9M294.0 38.9L302.1 38.9M302.1 38.9L313.7 38.9M313.7 38.9L325.8 38.9M362.4 38.9L370.4 38.9M370.4 38.9L381.2 38.9M381.2 38.9L389.5 38.9M389.5 38.9L397.1 38.9M417.2 38.9L426.1 38.9M437.1 38.9L443.0 38.9M443.0 38.9L452.0 38.9M452.0 38.9L454.0 38.9M289.0 45.3L294.0 45.3M294.0 45.3L302.1 45.3M302.1 45.3L313.7 45.3M313.7 45.3L325.8 45.3M362.4 45.3L370.4 45.3M370.4 45.3L381.2 45.3M389.5 45.3L397.1 45.3M426.1 45.3L437.1 45.3M443.0 45.3L452.0 45.3M452.0 45.3L454.0 45.3M289.0 52.0L294.0 52.0M313.7 52.0L325.8 52.0M381.2 52.0L389.5 52.0M406.7 52.0L417.2 52.0M417.2 52.0L426.1 52.0M426.1 52.0L437.1 52.0M437.1 52.0L443.0 52.0M452.0 52.0L454.0 52.0M289.0 62.8L294.0 62.8M294.0 62.8L302.1 62.8M381.2 62.8L389.5 62.8M389.5 62.8L397.1 62.8M397.1 62.8L406.7 62.8M417.2 62.8L426.1 62.8M426.1 62.8L437.1 62.8M437.1 62.8L443.0 62.8M443.0 62.8L452.0 62.8M452.0 62.8L454.0 62.8M289.0 74.0L294.0 74.0M294.0 74.0L302.1 74.0M302.1 74.0L313.7 74.0M313.7 74.0L325.8 74.0M325.8 74.0L334.1 74.0M334.1 74.0L340.8 74.0M340.8 74.0L351.6 74.0M351.6 74.0L362.4 74.0M362.4 74.0L370.4 74.0M406.7 74.0L417.2 74.0M417.2 74.0L426.1 74.0M443.0 74.0L452.0 74.0M452.0 74.0L454.0 74.0M289.0 85.1L294.0 85.1M294.0 85.1L302.1 85.1M302.1 85.1L313.7 85.1M313.7 85.1L325.8 85.1M325.8 85.1L334.1 85.1M334.1 85.1L340.8 85.1M340.8 85.1L351.6 85.1M351.6 85.1L362.4 85.1M362.4 85.1L370.4 85.1M370.4 85.1L381.2 85.1M397.1 85.1L406.7 85.1M406.7 85.1L417.2 85.1M417.2 85.1L426.1 85.1M437.1 85.1L443.0 85.1M443.0 85.1L452.0 85.1M452.0 85.1L454.0 85.1M294.0 92.6L302.1 92.6M325.8 92.6L334.1 92.6M334.1 92.6L340.8 92.6M351.6 92.6L362.4 92.6M362.4 92.6L370.4 92.6M370.4 92.6L381.2 92.6M381.2 92.6L389.5 92.6M389.5 92.6L397.1 92.6M397.1 92.6L406.7 92.6M417.2 92.6L426.1 92.6M426.1 92.6L437.1 92.6M437.1 92.6L443.0 92.6M452.0 92.6L454.0 92.6M289.0 103.7L294.0 103.7M294.0 103.7L302.1 103.7M302.1 103.7L313.7 103.7M313.7 103.7L325.8 103.7M340.8 103.7L351.6 103.7M370.4 103.7L381.2 103.7M381.2 103.7L389.5 103.7M389.5 103.7L397.1 103.7M397.1 103.7L406.7 103.7M417.2 103.7L426.1 103.7M437.1 103.7L443.0 103.7M443.0 103.7L452.0 103.7M452.0 103.7L454.0 103.7M302.1 110.1L313.7 110.1M351.6 110.1L362.4 110.1M362.4 110.1L370.4 110.1M370.4 110.1L381.2 110.1M389.5 110.1L397.1 110.1M406.7 110.1L417.2 110.1M417.2 110.1L426.1 110.1M426.1 110.1L437.1 110.1M443.0 110.1L452.0 110.1M452.0 110.1L454.0 110.1M289.0 119.9L294.0 119.9M302.1 119.9L313.7 119.9M325.8 119.9L334.1 119.9M334.1 119.9L340.8 119.9M362.4 119.9L370.4 119.9M370.4 119.9L381.2 119.9M417.2 119.9L426.1 119.9M426.1 119.9L437.1 119.9M437.1 119.9L443.0 119.9M443.0 119.9L452.0 119.9M452.0 119.9L454.0 119.9M289.0 131.0L294.0 131.0M437.1 131.0L443.0 131.0M443.0 131.0L452.0 131.0M452.0 131.0L454.0 131.0M289.0 137.7L294.0 137.7M443.0 144.0L452.0 144.0M452.0 144.0L454.0 144.0M294.0 153.6L302.1 153.6M302.1 153.6L313.7 153.6M313.7 153.6L325.8 153.6M325.8 153.6L334.1 153.6M340.8 153.6L351.6 153.6M362.4 153.6L370.4 153.6M381.2 153.6L389.5 153.6M389.5 153.6L397.1 153.6M397.1 153.6L406.7 153.6M406.7 153.6L417.2 153.6M417.2 153.6L426.1 153.6M437.1 153.6L443.0 153.6M443.0 153.6L452.0 153.6M452.0 153.6L454.0 153.6M289.0 164.3L294.0 164.3M294.0 164.3L302.1 164.3M334.1 164.3L340.8 164.3M340.8 164.3L351.6 164.3M351.6 164.3L362.4 164.3M362.4 164.3L370.4 164.3M381.2 164.3L389.5 164.3M389.5 164.3L397.1 164.3M397.1 164.3L406.7 164.3M417.2 164.3L426.1 164.3M426.1 164.3L437.1 164.3M437.1 164.3L443.0 164.3M443.0 164.3L452.0 164.3M452.0 164.3L454.0 164.3M289.0 174.2L294.0 174.2M294.0 174.2L302.1 174.2M302.1 174.2L313.7 174.2M313.7 174.2L325.8 174.2M325.8 174.2L334.1 174.2M334.1 174.2L340.8 174.2M340.8 174.2L351.6 174.2M351.6 174.2L362.4 174.2M370.4 174.2L381.2 174.2M381.2 174.2L389.5 174.2M397.1 174.2L406.7 174.2M417.2 174.2L426.1 174.2M437.1 174.2L443.0 174.2M443.0 174.2L452.0 174.2M289.0 185.4L294.0 185.4M294.0 185.4L302.1 185.4M302.1 185.4L313.7 185.4M325.8 185.4L334.1 185.4M334.1 185.4L340.8 185.4M351.6 185.4L362.4 185.4M370.4 185.4L381.2 185.4M381.2 185.4L389.5 185.4M417.2 185.4L426.1 185.4M437.1 185.4L443.0 185.4M443.0 185.4L452.0 185.4M289.0 193.6L294.0 193.6M302.1 193.6L313.7 193.6M313.7 193.6L325.8 193.6M325.8 193.6L334.1 193.6M334.1 193.6L340.8 193.6M340.8 193.6L351.6 193.6M362.4 193.6L370.4 193.6M381.2 193.6L389.5 193.6M389.5 193.6L397.1 193.6M397.1 193.6L406.7 193.6M417.2 193.6L426.1 193.6M426.1 193.6L437.1 193.6M443.0 193.6L452.0 193.6M294.0 201.3L302.1 201.3M313.7 201.3L325.8 201.3M325.8 201.3L334.1 201.3M334.1 201.3L340.8 201.3M340.8 201.3L351.6 201.3M381.2 201.3L389.5 201.3M389.5 201.3L397.1 201.3M397.1 201.3L406.7 201.3M406.7 201.3L417.2 201.3M417.2 201.3L426.1 201.3M426.1 201.3L437.1 201.3M443.0 201.3L452.0 201.3" fill="none" stroke="#e4e8ee" stroke-width="0.9"/>
<path d="M297.3 25.0L297.3 37.1M297.3 37.1L297.3 55.6M297.3 55.6L297.3 71.1M297.3 71.1L297.3 86.8M297.3 86.8L297.3 105.1M297.3 141.0L297.3 154.1M297.3 154.1L297.3 171.5M297.3 171.5L297.3 187.7M297.3 187.7L297.3 202.4M297.3 202.4L297.3 206.0M310.2 25.0L310.2 37.1M310.2 37.1L310.2 55.6M310.2 55.6L310.2 71.1M310.2 71.1L310.2 86.8M310.2 86.8L310.2 105.1M310.2 105.1L310.2 121.7M310.2 141.0L310.2 154.1M310.2 154.1L310.2 171.5M310.2 171.5L310.2 187.7M310.2 202.4L310.2 206.0M324.6 86.8L324.6 105.1M324.6 105.1L324.6 121.7M324.6 141.0L324.6 154.1M324.6 154.1L324.6 171.5M324.6 171.5L324.6 187.7M324.6 187.7L324.6 202.4M337.8 105.1L337.8 121.7M337.8 154.1L337.8 171.5M337.8 187.7L337.8 202.4M337.8 202.4L337.8 206.0M356.2 86.8L356.2 105.1M356.2 141.0L356.2 154.1M356.2 154.1L356.2 171.5M356.2 171.5L356.2 187.7M356.2 187.7L356.2 202.4M370.2 37.1L370.2 55.6M370.2 55.6L370.2 71.1M370.2 71.1L370.2 86.8M370.2 86.8L370.2 105.1M370.2 154.1L370.2 171.5M370.2 171.5L370.2 187.7M370.2 187.7L370.2 202.4M370.2 202.4L370.2 206.0M389.3 25.0L389.3 37.1M389.3 37.1L389.3 55.6M389.3 55.6L389.3 71.1M389.3 86.8L389.3 105.1M389.3 141.0L389.3 154.1M389.3 154.1L389.3 171.5M389.3 187.7L389.3 202.4M389.3 202.4L389.3 206.0M410.8 55.6L410.8 71.1M410.8 71.1L410.8 86.8M410.8 86.8L410.8 105.1M410.8 105.1L410.8 121.7M410.8 141.0L410.8 154.1M410.8 202.4L410.8 206.0M427.1 25.0L427.1 37.1M427.1 37.1L427.1 55.6M427.1 55.6L427.1 71.1M427.1 71.1L427.1 86.8M427.1 105.1L427.1 121.7M427.1 154.1L427.1 171.5M427.1 171.5L427.1 187.7M427.1 187.7L427.1 202.4M427.1 202.4L427.1 206.0M441.0 25.0L441.0 37.1M441.0 37.1L441.0 55.6M441.0 55.6L441.0 71.1M441.0 71.1L441.0 86.8M441.0 86.8L441.0 105.1M441.0 105.1L441.0 121.7M441.0 121.7L441.0 141.0M441.0 141.0L441.0 154.1M441.0 154.1L441.0 171.5M441.0 171.5L441.0 187.7M441.0 187.7L441.0 202.4M441.0 202.4L441.0 206.0M289.0 37.1L297.3 37.1M297.3 37.1L310.2 37.1M310.2 37.1L324.6 37.1M356.2 37.1L370.2 37.1M370.2 37.1L389.3 37.1M427.1 37.1L441.0 37.1M441.0 37.1L454.0 37.1M289.0 55.6L297.3 55.6M370.2 55.6L389.3 55.6M389.3 55.6L410.8 55.6M427.1 55.6L441.0 55.6M441.0 55.6L454.0 55.6M289.0 71.1L297.3 71.1M310.2 71.1L324.6 71.1M356.2 71.1L370.2 71.1M389.3 71.1L410.8 71.1M410.8 71.1L427.1 71.1M427.1 71.1L441.0 71.1M310.2 86.8L324.6 86.8M324.6 86.8L337.8 86.8M356.2 86.8L370.2 86.8M370.2 86.8L389.3 86.8M389.3 86.8L410.8 86.8M427.1 86.8L441.0 86.8M441.0 86.8L454.0 86.8M289.0 105.1L297.3 105.1M297.3 105.1L310.2 105.1M310.2 105.1L324.6 105.1M324.6 105.1L337.8 105.1M337.8 105.1L356.2 105.1M370.2 105.1L389.3 105.1M410.8 105.1L427.1 105.1M289.0 121.7L297.3 121.7M310.2 121.7L324.6 121.7M324.6 121.7L337.8 121.7M337.8 121.7L356.2 121.7M356.2 121.7L370.2 121.7M370.2 121.7L389.3 121.7M389.3 121.7L410.8 121.7M410.8 121.7L427.1 121.7M427.1 121.7L441.0 121.7M441.0 121.7L454.0 121.7M310.2 154.1L324.6 154.1M324.6 154.1L337.8 154.1M337.8 154.1L356.2 154.1M356.2 154.1L370.2 154.1M370.2 154.1L389.3 154.1M389.3 154.1L410.8 154.1M410.8 154.1L427.1 154.1M427.1 154.1L441.0 154.1M441.0 154.1L454.0 154.1M289.0 171.5L297.3 171.5M310.2 171.5L324.6 171.5M337.8 171.5L356.2 171.5M370.2 171.5L389.3 171.5M389.3 171.5L410.8 171.5M410.8 171.5L427.1 171.5M427.1 171.5L441.0 171.5M441.0 171.5L454.0 171.5M289.0 187.7L297.3 187.7M310.2 187.7L324.6 187.7M324.6 187.7L337.8 187.7M337.8 187.7L356.2 187.7M410.8 187.7L427.1 187.7M427.1 187.7L441.0 187.7M289.0 202.4L297.3 202.4M297.3 202.4L310.2 202.4M310.2 202.4L324.6 202.4M337.8 202.4L356.2 202.4M356.2 202.4L370.2 202.4M389.3 202.4L410.8 202.4M410.8 202.4L427.1 202.4M427.1 202.4L441.0 202.4" fill="none" stroke="#dde2ea" stroke-width="1.1"/>
<path d="M471.3 25.0L471.3 33.0M471.3 51.2L471.3 60.5M471.3 60.5L471.3 69.0M471.3 69.0L471.3 78.1M471.3 108.3L471.3 118.3M471.3 160.5L471.3 169.4M471.3 169.4L471.3 182.3M471.3 194.4L471.3 200.3M477.5 25.0L477.5 33.0M477.5 33.0L477.5 42.0M477.5 51.2L477.5 60.5M477.5 60.5L477.5 69.0M477.5 69.0L477.5 78.1M477.5 78.1L477.5 89.0M477.5 89.0L477.5 100.1M477.5 108.3L477.5 118.3M477.5 148.3L477.5 154.2M477.5 154.2L477.5 160.5M477.5 160.5L477.5 169.4M477.5 182.3L477.5 194.4M477.5 194.4L477.5 200.3M477.5 200.3L477.5 206.0M484.2 51.2L484.2 60.5M484.2 60.5L484.2 69.0M484.2 69.0L484.2 78.1M484.2 78.1L484.2 89.0M484.2 108.3L484.2 118.3M484.2 148.3L484.2 154.2M484.2 154.2L484.2 160.5M484.2 160.5L484.2 169.4M484.2 169.4L484.2 182.3M484.2 200.3L484.2 206.0M495.4 33.0L495.4 42.0M495.4 42.0L495.4 51.2M495.4 108.3L495.4 118.3M495.4 139.8L495.4 148.3M495.4 148.3L495.4 154.2M495.4 169.4L495.4 182.3M495.4 182.3L495.4 194.4M495.4 194.4L495.4 200.3M506.7 25.0L506.7 33.0M506.7 33.0L506.7 42.0M506.7 78.1L506.7 89.0M506.7 100.1L506.7 108.3M506.7 108.3L506.7 118.3M506.7 118.3L506.7 125.1M506.7 148.3L506.7 154.2M506.7 169.4L506.7 182.3M506.7 194.4L506.7 200.3M506.7 200.3L506.7 206.0M515.0 25.0L515.0 33.0M515.0 78.1L515.0 89.0M515.0 100.1L515.0 108.3M515.0 139.8L515.0 148.3M515.0 160.5L515.0 169.4M515.0 194.4L515.0 200.3M515.0 200.3L515.0 206.0M521.0 33.0L521.0 42.0M521.0 89.0L521.0 100.1M521.0 108.3L521.0 118.3M521.0 139.8L521.0 148.3M521.0 148.3L521.0 154.2M521.0 169.4L521.0 182.3M521.0 182.3L521.0 194.4M521.0 194.4L521.0 200.3M528.5 33.0L528.5 42.0M528.5 118.3L528.5 125.1M528.5 154.2L528.5 160.5M528.5 160.5L528.5 169.4M528.5 194.4L528.5 200.3M528.5 200.3L528.5 206.0M535.2 25.0L535.2 33.0M535.2 33.0L535.2 42.0M535.2 78.1L535.2 89.0M535.2 89.0L535.2 100.1M535.2 108.3L535.2 118.3M535.2 148.3L535.2 154.2M535.2 154.2L535.2 160.5M535.2 169.4L535.2 182.3M535.2 182.3L535.2 194.4M535.2 194.4L535.2 200.3M535.2 200.3L535.2 206.0M544.7 33.0L544.7 42.0M544.7 42.0L544.7 51.2M544.7 51.2L544.7 60.5M544.7 78.1L544.7 89.0M544.7 89.0L544.7 100.1M544.7 100.1L544.7 108.3M544.7 108.3L544.7 118.3M544.7 118.3L544.7 125.1M544.7 139.8L544.7 148.3M544.7 148.3L544.7 154.2M544.7 154.2L544.7 160.5M544.7 169.4L544.7 182.3M544.7 182.3L544.7 194.4M544.7 194.4L544.7 200.3M544.7 200.3L544.7 206.0M471.3 33.0L477.5 33.0M477.5 33.0L484.2 33.0M484.2 33.0L495.4 33.0M515.0 33.0L521.0 33.0M544.7 33.0L548.0 33.0M468.0 42.0L471.3 42.0M471.3 42.0L477.5 42.0M477.5 42.0L484.2 42.0M468.0 51.2L471.3 51.2M477.5 51.2L484.2 51.2M484.2 51.2L495.4 51.2M535.2 51.2L544.7 51.2M544.7 51.2L548.0 51.2M471.3 60.5L477.5 60.5M477.5 60.5L484.2 60.5M484.2 60.5L495.4 60.5M535.2 60.5L544.7 60.5M544.7 60.5L548.0 60.5M468.0 69.0L471.3 69.0M471.3 69.0L477.5 69.0M477.5 69.0L484.2 69.0M484.2 69.0L495.4 69.0M535.2 69.0L544.7 69.0M544.7 69.0L548.0 69.0M471.3 78.1L477.5 78.1M495.4 78.1L506.7 78.1M515.0 78.1L521.0 78.1M521.0 78.1L528.5 78.1M528.5 78.1L535.2 78.1M544.7 78.1L548.0 78.1M471.3 89.0L477.5 89.0M521.0 89.0L528.5 89.0M528.5 89.0L535.2 89.0M544.7 89.0L548.0 89.0M484.2 100.1L495.4 100.1M495.4 100.1L506.7 100.1M506.7 100.1L515.0 100.1M515.0 100.1L521.0 100.1M521.0 100.1L528.5 100.1M528.5 100.1L535.2 100.1M468.0 108.3L471.3 108.3M471.3 108.3L477.5 108.3M477.5 108.3L484.2 108.3M484.2 108.3L495.4 108.3M506.7 108.3L515.0 108.3M515.0 108.3L521.0 108.3M521.0 108.3L528.5 108.3M535.2 108.3L544.7 108.3M544.7 108.3L548.0 108.3M471.3 118.3L477.5 118.3M477.5 118.3L484.2 118.3M495.4 118.3L506.7 118.3M528.5 118.3L535.2 118.3M544.7 118.3L548.0 118.3M468.0 125.1L471.3 125.1M471.3 125.1L477.5 125.1M477.5 125.1L484.2 125.1M484.2 125.1L495.4 125.1M506.7 125.1L515.0 125.1M521.0 125.1L528.5 125.1M544.7 125.1L548.0 125.1M468.0 148.3L471.3 148.3M471.3 148.3L477.5 148.3M495.4 148.3L506.7 148.3M544.7 148.3L548.0 148.3M468.0 154.2L471.3 154.2M471.3 154.2L477.5 154.2M477.5 154.2L484.2 154.2M528.5 154.2L535.2 154.2M484.2 160.5L495.4 160.5M495.4 160.5L506.7 160.5M506.7 160.5L515.0 160.5M528.5 160.5L535.2 160.5M535.2 160.5L544.7 160.5M471.3 169.4L477.5 169.4M477.5 169.4L484.2 169.4M521.0 169.4L528.5 169.4M528.5 169.4L535.2 169.4M468.0 182.3L471.3 182.3M471.3 182.3L477.5 182.3M477.5 182.3L484.2 182.3M484.2 182.3L495.4 182.3M506.7 182.3L515.0 182.3M515.0 182.3L521.0 182.3M544.7 182.3L548.0 182.3M495.4 194.4L506.7 194.4M506.7 194.4L515.0 194.4M515.0 194.4L521.0 194.4M528.5 194.4L535.2 194.4M544.7 194.4L548.0 194.4M468.0 200.3L471.3 200.3M477.5 200.3L484.2 200.3M495.4 200.3L506.7 200.3M506.7 200.3L515.0 200.3M521.0 200.3L528.5 200.3M528.5 200.3L535.2 200.3M535.2 200.3L544.7 200.3M544.7 200.3L548.0 200.3" fill="none" stroke="#e4e8ee" stroke-width="0.9"/>
<path d="M559.2 64.2L559.2 81.5M559.2 98.0L559.2 114.4M575.6 35.1L575.6 51.3M575.6 51.3L575.6 64.2M575.6 64.2L575.6 81.5M584.8 51.3L584.8 64.2M584.8 64.2L584.8 81.5M595.8 81.5L595.8 98.0M595.8 98.0L595.8 114.4M605.1 64.2L605.1 81.5M626.1 35.1L626.1 51.3M626.1 98.0L626.1 114.4M548.0 35.1L559.2 35.1M559.2 35.1L575.6 35.1M605.1 35.1L618.0 35.1M618.0 35.1L626.1 35.1M595.8 51.3L605.1 51.3M559.2 64.2L575.6 64.2M575.6 64.2L584.8 64.2M548.0 81.5L559.2 81.5M559.2 81.5L575.6 81.5M605.1 81.5L618.0 81.5M626.1 81.5L640.0 81.5M548.0 98.0L559.2 98.0M559.2 98.0L575.6 98.0M584.8 98.0L595.8 98.0M618.0 98.0L626.1 98.0" fill="none" stroke="#e4e8ee" stroke-width="0.9"/>
<path d="M579.2 130.5L579.2 138.6M579.2 187.8L579.2 190.0M586.4 187.8L586.4 190.0M594.9 125.0L594.9 130.5M594.9 130.5L594.9 138.6M594.9 147.3L594.9 155.6M594.9 173.1L594.9 181.4M594.9 187.8L594.9 190.0M601.3 130.5L601.3 138.6M601.3 155.6L601.3 164.7M601.3 187.8L601.3 190.0M610.2 125.0L610.2 130.5M610.2 138.6L610.2 147.3M610.2 164.7L610.2 173.1M610.2 173.1L610.2 181.4M620.5 138.6L620.5 147.3M620.5 155.6L620.5 164.7M620.5 173.1L620.5 181.4M620.5 181.4L620.5 187.8M620.5 187.8L620.5 190.0M629.9 130.5L629.9 138.6M629.9 155.6L629.9 164.7M629.9 164.7L629.9 173.1M629.9 181.4L629.9 187.8M636.2 155.6L636.2 164.7M636.2 173.1L636.2 181.4M641.1 125.0L641.1 130.5M641.1 138.6L641.1 147.3M641.1 164.7L641.1 173.1M641.1 181.4L641.1 187.8M648.3 147.3L648.3 155.6M648.3 187.8L648.3 190.0M655.9 138.6L655.9 147.3M655.9 173.1L655.9 181.4M655.9 187.8L655.9 190.0M620.5 130.5L629.9 130.5M636.2 130.5L641.1 130.5M648.3 130.5L655.9 130.5M655.9 130.5L662.0 130.5M610.2 138.6L620.5 138.6M629.9 138.6L636.2 138.6M641.1 138.6L648.3 138.6M655.9 138.6L662.0 138.6M629.9 147.3L636.2 147.3M641.1 147.3L648.3 147.3M575.0 155.6L579.2 155.6M610.2 155.6L620.5 155.6M575.0 164.7L579.2 164.7M579.2 164.7L586.4 164.7M586.4 164.7L594.9 164.7M601.3 164.7L610.2 164.7M610.2 164.7L620.5 164.7M648.3 164.7L655.9 164.7M586.4 173.1L594.9 173.1M641.1 173.1L648.3 173.1M655.9 173.1L662.0 173.1M579.2 181.4L586.4 181.4M586.4 181.4L594.9 181.4M601.3 181.4L610.2 181.4M641.1 181.4L648.3 181.4M601.3 187.8L610.2 187.8M629.9 187.8L636.2 187.8M636.2 187.8L641.1 187.8M641.1 187.8L648.3 187.8" fill="none" stroke="#e4e8ee" stroke-width="0.9"/>
<path d="M548.0 28.0 L560.0 30.9 L577.7 39.7 L604.3 46.8 L631.0 60.0 L645.0 66.3 L662.0 70.8 L675.3 74.3 L690.0 80.0" fill="none" stroke="#d6dde8" stroke-width="2.2" stroke-linejoin="round" />
<path d="M560.0 30.9 L577.7 39.7 L604.3 46.8 L631.0 60.0 L645.0 66.3 L662.0 70.8 L675.3 74.3" fill="none" stroke="#f2f3f6" stroke-width="0.6" stroke-linejoin="round" />
<path d="M560.0 40.0 L580.0 45.0 L600.0 52.0 L625.0 63.0 L640.0 70.0" fill="none" stroke="#e4e8ee" stroke-width="0.9" stroke-linejoin="round" />
<path d="M545.0 152.0 L565.0 151.0 L585.0 153.0 L605.0 151.0 L621.0 152.0 L633.0 156.0 L643.0 161.0 L653.0 166.0 L659.0 170.0 L657.0 178.0 L661.0 186.0 L665.0 194.0 L673.0 202.0 L680.0 207.0" fill="none" stroke="#d6dde8" stroke-width="2" stroke-linejoin="round" />
<path d="M595.0 124.0 L611.0 126.0 L625.0 132.0 L631.0 142.0 L633.0 156.0" fill="none" stroke="#d6dde8" stroke-width="1.6" stroke-linejoin="round" />
<path d="M571.0 164.0 L585.0 161.0 L601.0 158.0 L621.0 152.0" fill="none" stroke="#d6dde8" stroke-width="1.3" stroke-linejoin="round" />
<path d="M553.0 158.0 L571.0 164.0 L581.0 172.0 L591.0 184.0 L595.0 192.0" fill="none" stroke="#d6dde8" stroke-width="1.3" stroke-linejoin="round" />
<path d="M575.0 178.0 L581.0 186.0 L593.0 190.0" fill="none" stroke="#e4e8ee" stroke-width="1.1" stroke-linejoin="round" />
<path d="M545.0 184.0 L555.0 186.0 L565.0 194.0 L567.0 207.0" fill="none" stroke="#e4e8ee" stroke-width="1.2" stroke-linejoin="round" />
<path d="M625.0 154.0 L639.0 164.0 L645.0 174.0 L653.0 180.0 L657.0 178.0" fill="none" stroke="#d6dde8" stroke-width="1.2" stroke-linejoin="round" />
<path d="M621.0 158.0 L621.0 170.0 L631.0 170.0 L631.0 158.0" fill="none" stroke="#e4e8ee" stroke-width="1" stroke-linejoin="round" />
<path d="M611.0 126.0 L613.0 140.0 L621.0 152.0" fill="none" stroke="#e4e8ee" stroke-width="1" stroke-linejoin="round" />
<path d="M585.0 153.0 L587.0 140.0 L595.0 124.0" fill="none" stroke="#e4e8ee" stroke-width="1" stroke-linejoin="round" />
<path d="M565.0 151.0 L567.0 138.0 L575.0 128.0" fill="none" stroke="#e4e8ee" stroke-width="1" stroke-linejoin="round" />
<path d="M601.0 158.0 L603.0 168.0 L611.0 176.0 L621.0 180.0" fill="none" stroke="#e4e8ee" stroke-width="1" stroke-linejoin="round" />
<path d="M548.0 196.0 L560.0 192.0 L572.0 198.0 L580.0 207.0" fill="none" stroke="#e4e8ee" stroke-width="1" stroke-linejoin="round" />
<path d="M640.0 120.0 L650.0 135.0 L655.0 150.0 L653.0 166.0" fill="none" stroke="#e4e8ee" stroke-width="1" stroke-linejoin="round" />
<path d="M690.0 90.0 L695.0 110.0 L705.0 130.0 L709.0 140.0" fill="none" stroke="#cfeede" stroke-width="1" stroke-linejoin="round" />
<path d="M698.0 98.0 L703.0 120.0 L709.0 130.0" fill="none" stroke="#cfeede" stroke-width="0.8" stroke-linejoin="round" />
<path d="M690.0 60.0 L700.0 70.0 L706.0 86.0 L700.0 96.0 L712.0 100.0" fill="none" stroke="#d9dfe9" stroke-width="1.6" stroke-linejoin="round" />
<path d="M697.0 86.0 L694.0 96.0 L700.0 104.0" fill="none" stroke="#d9dfe9" stroke-width="1.2" stroke-linejoin="round" />
<path d="M9.5 25.0 L9.5 206.0" fill="none" stroke="#d9dfe9" stroke-width="1.8" stroke-linejoin="round" />
<path d="M36.7 25.0 L38.5 85.0 L41.7 188.0 L42.3 207.0" fill="none" stroke="#d0d8e4" stroke-width="4.2" stroke-linejoin="round" />
<path d="M85.3 25.0 L85.3 206.0" fill="none" stroke="#d0d8e4" stroke-width="2" stroke-linejoin="round" />
<path d="M240.4 25.0 L240.4 206.0" fill="none" stroke="#d0d8e4" stroke-width="2" stroke-linejoin="round" />
<path d="M7.0 79.2 L286.0 79.2" fill="none" stroke="#d0d8e4" stroke-width="2" stroke-linejoin="round" />
<path d="M286.0 79.2 L470.0 79.2 L540.0 80.0 L575.0 82.0 L600.0 83.0" fill="none" stroke="#d0d8e4" stroke-width="2" stroke-linejoin="round" />
<path d="M7.0 153.0 L85.0 153.0" fill="none" stroke="#d9dfe9" stroke-width="2" stroke-linejoin="round" />
<path d="M85.0 189.0 L240.0 189.0" fill="none" stroke="#d9dfe9" stroke-width="1.8" stroke-linejoin="round" />
<path d="M7.0 30.0 L150.0 30.0" fill="none" stroke="#d9dfe9" stroke-width="1.4" stroke-linejoin="round" />
<path d="M240.0 167.0 L286.0 167.0" fill="none" stroke="#d9dfe9" stroke-width="1.4" stroke-linejoin="round" />
<path d="M17.0 207.0 L30.0 199.0 L44.0 190.0" fill="none" stroke="#d9dfe9" stroke-width="1.2" stroke-linejoin="round" />
<path d="M44.0 190.0 L57.3 180.2 L77.7 165.5 L85.0 160.0 L112.0 140.0 L135.0 118.0 L145.0 104.0 L150.0 95.0" fill="none" stroke="#d0d8e4" stroke-width="2" stroke-linejoin="round" />
<path d="M288.0 113.0 L470.0 113.0" fill="none" stroke="#d9dfe9" stroke-width="2" stroke-linejoin="round" />
<path d="M288.0 169.5 L470.0 169.5" fill="none" stroke="#d9dfe9" stroke-width="1.8" stroke-linejoin="round" />
<path d="M288.0 189.0 L454.0 189.0" fill="none" stroke="#d9dfe9" stroke-width="1.4" stroke-linejoin="round" />
<path d="M421.4 25.0 L420.3 78.0" fill="none" stroke="#d0d8e4" stroke-width="2.2" stroke-linejoin="round" />
<path d="M362.0 78.0 L362.0 113.0" fill="none" stroke="#d9dfe9" stroke-width="1.6" stroke-linejoin="round" />
<path d="M463.8 25.0 L462.8 43.0 L462.0 65.0 L463.2 86.0 L466.0 107.5 L468.0 112.0 L470.6 134.0 L472.7 155.0 L474.5 177.0 L472.7 195.0 L470.0 206.0" fill="none" stroke="#d0d8e4" stroke-width="2" stroke-linejoin="round" />
<path d="M548.3 25.0 L545.5 55.0 L543.5 79.0 L540.3 105.0 L539.5 140.0 L538.7 160.0 L535.0 174.0 L525.5 187.4 L512.4 206.0" fill="none" stroke="#d0d8e4" stroke-width="2.8" stroke-linejoin="round" />
<path d="M540.0 100.0 L560.0 108.0 L590.0 120.0" fill="none" stroke="#d9dfe9" stroke-width="1.5" stroke-linejoin="round" />
<path d="M370.4 25.0 L372.5 40.0 L372.5 65.0 L370.5 72.0 L367.6 76.0 L367.2 78.8 L420.3 78.8 L420.6 130.0 L421.0 207.0" fill="none" stroke="#a3b3cf" stroke-width="3.2" stroke-linejoin="round" />
<path d="M282.9 25.0 L282.9 112.0" fill="none" stroke="#a5e0f3" stroke-width="0.8" stroke-linejoin="round" />
<path d="M285.8 25.0 L285.8 110.0 L286.8 122.0 L289.5 136.0 L292.5 148.0 L294.7 160.0 L294.7 206.0" fill="none" stroke="#8da4c4" stroke-width="5.4" stroke-linejoin="round" />
<path d="M288.2 25.0 L288.2 110.0 L289.2 122.0 L291.9 136.0 L294.9 148.0 L297.1 160.0 L297.1 206.0" fill="none" stroke="#7d95ba" stroke-width="0.7" stroke-linejoin="round" />
<path d="M565.0 17.0 L585.5 25.0 L602.6 29.5 L618.5 36.2 L631.0 40.6 L648.7 46.8 L666.4 57.5 L684.0 73.4 L698.3 82.3 L712.0 85.8" fill="none" stroke="#8da4c4" stroke-width="5" stroke-linejoin="round" />
<path d="M20.0 206.5 L45.0 192.5 L85.0 171.0 L100.0 164.5 L120.0 157.3 L160.0 143.0 L200.0 135.5 L240.0 133.0 L286.0 133.0 L330.0 132.6 L430.0 133.2 L525.5 133.2 L549.4 128.9 L590.0 121.7 L649.0 111.0 L712.0 100.0" fill="none" stroke="#ffffff" stroke-width="2.9000000000000004" stroke-linejoin="round" />
<path d="M20.0 206.5 L45.0 192.5 L85.0 171.0 L100.0 164.5 L120.0 157.3 L160.0 143.0 L200.0 135.5 L240.0 133.0 L286.0 133.0 L330.0 132.6 L430.0 133.2 L525.5 133.2 L549.4 128.9 L590.0 121.7 L649.0 111.0 L712.0 100.0" fill="none" stroke="#b0b0b0" stroke-width="2.1" stroke-linejoin="round" stroke-dasharray="5 4"/>
<path d="M20.0 206.5 L45.0 192.5 L85.0 171.0 L100.0 164.5 L120.0 157.3 L160.0 143.0 L200.0 135.5 L240.0 133.0 L286.0 133.0 L330.0 132.6 L430.0 133.2 L525.5 133.2 L549.4 128.9 L590.0 121.7 L649.0 111.0 L712.0 100.0" fill="none" stroke="#dcdcdc" stroke-width="2.1" stroke-linejoin="round" stroke-dasharray="4 5" stroke-dashoffset="-5"/>
<path d="M430.0 133.2 L500.0 132.9 L525.5 131.5 L543.7 128.4 L590.0 120.8 L622.3 115.3 L657.3 110.5" fill="none" stroke="#ffffff" stroke-width="3.8" stroke-linejoin="round" />
<path d="M430.0 133.2 L500.0 132.9 L525.5 131.5 L543.7 128.4 L590.0 120.8 L622.3 115.3 L657.3 110.5" fill="none" stroke="#d9d9d9" stroke-width="3.0" stroke-linejoin="round" />
<path d="M430.0 133.2 L500.0 132.9 L525.5 131.5 L543.7 128.4 L590.0 120.8 L622.3 115.3 L657.3 110.5" fill="none" stroke="#9c9c9c" stroke-width="3.0" stroke-linejoin="round" stroke-dasharray="6 5"/>
<path d="M430.0 133.2 L500.0 132.9 L525.5 131.5 L543.7 128.4 L590.0 120.8 L622.3 115.3 L657.3 110.5" fill="none" stroke="#f2f2f2" stroke-width="0.5" stroke-linejoin="round" />
<path d="M200.0 138.0 L240.0 136.5 L300.0 136.5 L430.0 136.2 L470.0 136.2" fill="none" stroke="#ffffff" stroke-width="2.0" stroke-linejoin="round" />
<path d="M200.0 138.0 L240.0 136.5 L300.0 136.5 L430.0 136.2 L470.0 136.2" fill="none" stroke="#b0b0b0" stroke-width="1.2" stroke-linejoin="round" stroke-dasharray="5 4"/>
<path d="M200.0 138.0 L240.0 136.5 L300.0 136.5 L430.0 136.2 L470.0 136.2" fill="none" stroke="#dcdcdc" stroke-width="1.2" stroke-linejoin="round" stroke-dasharray="4 5" stroke-dashoffset="-5"/>
<path d="M163.7 25.0 L165.0 62.0 L167.3 75.0 L169.0 88.0 L172.0 100.0 L176.0 112.0 L185.0 121.0 L194.5 127.0 L212.7 131.0 L238.0 132.5" fill="none" stroke="#b9b9b9" stroke-width="1.4" stroke-linejoin="round" />
<path d="M163.7 25.0 L165.0 62.0 L167.3 75.0 L169.0 88.0 L172.0 100.0 L176.0 112.0 L185.0 121.0 L194.5 127.0 L212.7 131.0 L238.0 132.5" fill="none" stroke="#dedede" stroke-width="1.4" stroke-linejoin="round" stroke-dasharray="3 4"/>
<path d="M25.0 206.5 L45.0 195.6 L85.0 174.4 L100.0 167.8 L120.0 160.5 L145.0 153.8 L180.0 144.5 L194.5 142.4 L216.0 144.5 L250.0 147.0 L300.0 146.5 L350.0 143.0 L430.0 138.4 L485.0 134.8 L535.0 135.6 L563.7 139.6 L590.0 144.4 L712.0 171.3" fill="none" stroke="#ffffff" stroke-width="2.4" stroke-linejoin="round" />
<path d="M25.0 206.5 L45.0 195.6 L85.0 174.4 L100.0 167.8 L120.0 160.5 L145.0 153.8 L180.0 144.5 L194.5 142.4 L216.0 144.5 L250.0 147.0 L300.0 146.5 L350.0 143.0 L430.0 138.4 L485.0 134.8 L535.0 135.6 L563.7 139.6 L590.0 144.4 L712.0 171.3" fill="none" stroke="#2b9aa6" stroke-width="1.5" stroke-linejoin="round" stroke-dasharray="9 3.5"/>
<path d="M25.0 206.5 L45.0 195.6 L85.0 174.4 L100.0 167.8 L120.0 160.5 L145.0 153.8 L180.0 144.5 L194.5 142.4 L216.0 144.5 L250.0 147.0 L300.0 146.5 L350.0 143.0 L430.0 138.4 L485.0 134.8 L535.0 135.6 L563.7 139.6 L590.0 144.4 L712.0 171.3" fill="none" stroke="#bfe3e6" stroke-width="1.0" stroke-linejoin="round" stroke-dasharray="3.5 9" stroke-dashoffset="-9"/>
<path d="M464.3 25.0 L464.0 65.0 L464.8 86.0 L468.0 98.0 L472.0 107.5 L476.0 112.0 L482.5 125.0 L484.7 144.7 L486.3 177.5 L489.0 206.0" fill="none" stroke="#7d7d7d" stroke-width="0.8" stroke-linejoin="round" />
<path d="M366.3 25.0 L366.3 90.0 L368.5 125.0 L369.0 165.0 L368.0 206.0" fill="none" stroke="#6a6a6a" stroke-width="0.9" stroke-linejoin="round" />
<path d="M281.0 206.0 L281.0 170.0 L284.0 155.0 L292.0 146.0 L305.0 143.0 L330.0 143.0" fill="none" stroke="#7d7d7d" stroke-width="0.8" stroke-linejoin="round" />
<path d="M437.0 136.5 L444.4 141.5 L460.0 158.0 L481.5 184.0 L487.0 200.0 L488.0 206.0" fill="none" stroke="#a2a2a2" stroke-width="1.0" stroke-linejoin="round" />
<path d="M456.4 123.0 L454.0 140.0 L449.8 155.6 L441.0 166.5 L440.0 185.0 L441.0 206.0" fill="none" stroke="#a5e0f3" stroke-width="0.8" stroke-linejoin="round" />
<path d="M86.9 80.0 L89.1 76.4 L96.9 76.4 L99.1 80.0 L96.9 83.6 L89.1 83.6Z" fill="#3a72c8" stroke="#fff" stroke-width="0.7" stroke-linejoin="round"/>
<text x="93" y="81.9" font-size="5.3" font-weight="bold" fill="#fff" text-anchor="middle">113</text>
<path d="M297.1 78.7 L299.3 75.1 L307.1 75.1 L309.3 78.7 L307.1 82.3 L299.3 82.3Z" fill="#3a72c8" stroke="#fff" stroke-width="0.7" stroke-linejoin="round"/>
<text x="303.2" y="80.6" font-size="5.3" font-weight="bold" fill="#fff" text-anchor="middle">113</text>
<path d="M344.9 78.7 L347.1 75.1 L354.9 75.1 L357.1 78.7 L354.9 82.3 L347.1 82.3Z" fill="#3a72c8" stroke="#fff" stroke-width="0.7" stroke-linejoin="round"/>
<text x="351" y="80.6" font-size="5.3" font-weight="bold" fill="#fff" text-anchor="middle">113</text>
<path d="M473.9 78.3 L476.1 74.7 L483.9 74.7 L486.1 78.3 L483.9 81.9 L476.1 81.9Z" fill="#3a72c8" stroke="#fff" stroke-width="0.7" stroke-linejoin="round"/>
<text x="480" y="80.2" font-size="5.3" font-weight="bold" fill="#fff" text-anchor="middle">113</text>
<path d="M537.4 79.0 L539.6 75.4 L547.4 75.4 L549.6 79.0 L547.4 82.6 L539.6 82.6Z" fill="#3a72c8" stroke="#fff" stroke-width="0.7" stroke-linejoin="round"/>
<text x="543.5" y="80.9" font-size="5.3" font-weight="bold" fill="#fff" text-anchor="middle">143</text>
<path d="M532.5 155.6 L534.7 152.0 L542.5 152.0 L544.7 155.6 L542.5 159.2 L534.7 159.2Z" fill="#3a72c8" stroke="#fff" stroke-width="0.7" stroke-linejoin="round"/>
<text x="538.6" y="157.5" font-size="5.3" font-weight="bold" fill="#fff" text-anchor="middle">143</text>
<path d="M555.6 146.3 L557.8 142.7 L565.6 142.7 L567.8 146.3 L565.6 149.9 L557.8 149.9Z" fill="#3a72c8" stroke="#fff" stroke-width="0.7" stroke-linejoin="round"/>
<text x="561.7" y="148.2" font-size="5.3" font-weight="bold" fill="#fff" text-anchor="middle">118</text>
<path d="M656.8 70.8 L659.0 67.2 L666.8 67.2 L669.0 70.8 L666.8 74.4 L659.0 74.4Z" fill="#3a72c8" stroke="#fff" stroke-width="0.7" stroke-linejoin="round"/>
<text x="662.9" y="72.7" font-size="5.3" font-weight="bold" fill="#fff" text-anchor="middle">116</text>
<path d="M376.2 169.5 L378.4 165.9 L386.2 165.9 L388.4 169.5 L386.2 173.1 L378.4 173.1Z" fill="#3a72c8" stroke="#fff" stroke-width="0.7" stroke-linejoin="round"/>
<text x="382.3" y="171.4" font-size="5.3" font-weight="bold" fill="#fff" text-anchor="middle">115</text>
<path d="M368.1 41.199999999999996 q3.9 -1.1 7.8 0 q0.5 4.2 -3.9 6.9 q-4.4 -2.7 -3.9 -6.9z" fill="#2d6fd2" stroke="#fff" stroke-width="0.4"/>
<text x="372" y="45.6" font-size="4.9" font-weight="bold" fill="#fff" text-anchor="middle">24</text>
<path d="M281.1 39.199999999999996 q3.9 -1.1 7.8 0 q0.5 4.2 -3.9 6.9 q-4.4 -2.7 -3.9 -6.9z" fill="#2d6fd2" stroke="#fff" stroke-width="0.4"/>
<text x="285" y="43.6" font-size="4.9" font-weight="bold" fill="#fff" text-anchor="middle">1</text>
<path d="M290.8 183.70000000000002 q3.9 -1.1 7.8 0 q0.5 4.2 -3.9 6.9 q-4.4 -2.7 -3.9 -6.9z" fill="#2d6fd2" stroke="#fff" stroke-width="0.4"/>
<text x="294.7" y="188.1" font-size="4.9" font-weight="bold" fill="#fff" text-anchor="middle">1</text>
<path d="M598.7 26.4 q3.9 -1.1 7.8 0 q0.5 4.2 -3.9 6.9 q-4.4 -2.7 -3.9 -6.9z" fill="#2d6fd2" stroke="#fff" stroke-width="0.4"/>
<text x="602.6" y="30.8" font-size="4.9" font-weight="bold" fill="#fff" text-anchor="middle">1</text>
<path d="M154.3 70.6 L159.6 77.7 L164.9 70.6Z" fill="rgba(110,110,110,0.22)"/>
<path d="M154.6 70.4 L159.6 77.1 L164.6 70.4Z" fill="#fff"/>
<circle cx="159.6" cy="67.8" r="5.7" fill="#fff"/>
<circle cx="159.6" cy="67.8" r="5.0" fill="#f23cb9"/>
<g transform="translate(159.6 67.8) scale(1.12)" fill="#fff" stroke="none"><rect x="-2.6" y="-0.2" width="5.2" height="1.5"/><rect x="-2.6" y="-1.8" width="0.7" height="3.8"/><rect x="1.9" y="0" width="0.7" height="2"/><circle cx="-1" cy="-1" r="0.7"/><rect x="0" y="-1.3" width="2.6" height="1.2"/></g>
<path d="M151.7 105.3 L157.0 112.4 L162.3 105.3Z" fill="rgba(110,110,110,0.22)"/>
<path d="M152.0 105.1 L157.0 111.8 L162.0 105.1Z" fill="#fff"/>
<circle cx="157" cy="102.5" r="5.7" fill="#fff"/>
<circle cx="157" cy="102.5" r="5.0" fill="#a557f0"/>
<g transform="translate(157 102.5) scale(1.12)" fill="#fff" stroke="none"><path d="M-2.6 -0.8 L0 -2.6 L2.6 -0.8z"/><rect x="-2.2" y="-0.4" width="0.8" height="2"/><rect x="-0.4" y="-0.4" width="0.8" height="2"/><rect x="1.4" y="-0.4" width="0.8" height="2"/><rect x="-2.6" y="1.8" width="5.2" height="0.7"/></g>
<path d="M211.1 100.0 L216.4 107.1 L221.7 100.0Z" fill="rgba(110,110,110,0.22)"/>
<path d="M211.4 99.8 L216.4 106.5 L221.4 99.8Z" fill="#fff"/>
<circle cx="216.4" cy="97.2" r="5.7" fill="#fff"/>
<circle cx="216.4" cy="97.2" r="5.0" fill="#a557f0"/>
<g transform="translate(216.4 97.2) scale(1.12)" fill="#fff" stroke="none"><path d="M-2.6 -1.2 q1.2 -1 2.6 -0.4 l0.6 -0.9 l0.5 1.3 q1.6 1 1.6 3.6 l-0.9 -0.7 l-0.6 0.9 q0.2 -2 -1.4 -2.6 q-0.8 0.7 -1.6 0.2 q-0.4 -0.5 -0.8 -1.4z"/></g>
<path d="M37.1 91.6 L42.4 98.7 L47.7 91.6Z" fill="rgba(110,110,110,0.22)"/>
<path d="M37.4 91.4 L42.4 98.1 L47.4 91.4Z" fill="#fff"/>
<circle cx="42.4" cy="88.8" r="5.7" fill="#fff"/>
<circle cx="42.4" cy="88.8" r="5.0" fill="#f5821f"/>
<g transform="translate(42.4 88.8) scale(1.12)" fill="#fff" stroke="none"><rect x="-1.8" y="-2.6" width="0.5" height="2.2"/><rect x="-1.1" y="-2.6" width="0.5" height="2.2"/><rect x="-0.4" y="-2.6" width="0.5" height="2.2"/><rect x="-1.8" y="-0.8" width="1.9" height="0.6"/><rect x="-1.15" y="-0.6" width="0.6" height="3.2"/><path d="M1 -2.6 q1.2 0.4 1.2 2.6 h-0.6 v2.6 h-0.6z"/></g>
<path d="M2.2 49.8 L7.5 56.9 L12.8 49.8Z" fill="rgba(110,110,110,0.22)"/>
<path d="M2.5 49.6 L7.5 56.3 L12.5 49.6Z" fill="#fff"/>
<circle cx="7.5" cy="47" r="5.7" fill="#fff"/>
<circle cx="7.5" cy="47" r="5.0" fill="#f5821f"/>
<path d="M264.0 36.9 L269.3 44.0 L274.6 36.9Z" fill="rgba(110,110,110,0.22)"/>
<path d="M264.3 36.7 L269.3 43.4 L274.3 36.7Z" fill="#fff"/>
<circle cx="269.3" cy="34.1" r="5.7" fill="#fff"/>
<circle cx="269.3" cy="34.1" r="5.0" fill="#78909c"/>
<g transform="translate(269.3 34.1) scale(1.12)" fill="#fff" stroke="none"><path d="M-2.3 -2.3h2.65v0.7h-1.95v1.25h1.95v0.7h-2.65z M2.3 2.3h-2.65v-0.7h1.95v-1.25h-1.95v-0.7h2.65z M-0.35 -2.3h0.7v4.6h-0.7z M0.35 -2.3h1.95v2.65h-0.7v-1.95h-1.25z M-0.35 2.3h-1.95v-2.65h0.7v1.95h1.25z"/></g>
<path d="M185.7 141.8 L191.0 148.9 L196.3 141.8Z" fill="rgba(110,110,110,0.22)"/>
<path d="M186.0 141.6 L191.0 148.3 L196.0 141.6Z" fill="#fff"/>
<circle cx="191" cy="139" r="5.7" fill="#fff"/>
<circle cx="191" cy="139" r="5.0" fill="#78909c"/>
<g transform="translate(191 139) scale(1.12)" fill="#fff" stroke="none"><rect x="-2.6" y="-2.2" width="5.2" height="0.8"/><rect x="-2" y="-0.8" width="4" height="0.6"/><rect x="-1.6" y="-1.6" width="0.7" height="4"/><rect x="0.9" y="-1.6" width="0.7" height="4"/></g>
<path d="M297.7 170.8 L303.0 177.9 L308.3 170.8Z" fill="rgba(110,110,110,0.22)"/>
<path d="M298.0 170.6 L303.0 177.3 L308.0 170.6Z" fill="#fff"/>
<circle cx="303" cy="168" r="5.7" fill="#fff"/>
<circle cx="303" cy="168" r="5.0" fill="#1a9cf0"/>
<g transform="translate(303 168) scale(1.12)" fill="#fff" stroke="none"><rect x="-2.2" y="-0.8" width="4.4" height="3.2" rx="0.5"/><path d="M-1 -0.8 v-0.6 q0 -1 1 -1 q1 0 1 1 v0.6" fill="none" stroke="#fff" stroke-width="0.6"/></g>
<path d="M346.7 48.9 L352.0 56.0 L357.3 48.9Z" fill="rgba(110,110,110,0.22)"/>
<path d="M347.0 48.7 L352.0 55.4 L357.0 48.7Z" fill="#fff"/>
<circle cx="352" cy="46.1" r="5.7" fill="#fff"/>
<circle cx="352" cy="46.1" r="5.0" fill="#78909c"/>
<g transform="translate(352 46.1) scale(1.12)" fill="#fff" stroke="none"><path d="M-2.3 -2.3h2.65v0.7h-1.95v1.25h1.95v0.7h-2.65z M2.3 2.3h-2.65v-0.7h1.95v-1.25h-1.95v-0.7h2.65z M-0.35 -2.3h0.7v4.6h-0.7z M0.35 -2.3h1.95v2.65h-0.7v-1.95h-1.25z M-0.35 2.3h-1.95v-2.65h0.7v1.95h1.25z"/></g>
<path d="M355.7 98.8 L361.0 105.9 L366.3 98.8Z" fill="rgba(110,110,110,0.22)"/>
<path d="M356.0 98.6 L361.0 105.3 L366.0 98.6Z" fill="#fff"/>
<circle cx="361" cy="96" r="5.7" fill="#fff"/>
<circle cx="361" cy="96" r="5.0" fill="#6a6f9c"/>
<g transform="translate(361 96) scale(1.12)" fill="#fff" stroke="none"><circle cx="-1" cy="-1" r="1"/><rect x="0.2" y="-2" width="1.8" height="1.8"/><path d="M-2 2 L-1 0.3 L0 2z"/><circle cx="1.1" cy="1.2" r="0.9"/></g>
<path d="M313.7 151.5 L319.0 158.6 L324.3 151.5Z" fill="rgba(110,110,110,0.22)"/>
<path d="M314.0 151.3 L319.0 158.0 L324.0 151.3Z" fill="#fff"/>
<circle cx="319" cy="148.7" r="5.7" fill="#fff"/>
<circle cx="319" cy="148.7" r="5.0" fill="#8a8a8a"/>
<g transform="translate(319 148.7) scale(1.12)" fill="#fff" stroke="none"><rect x="-2.6" y="-0.2" width="5.2" height="1.5"/><rect x="-2.6" y="-1.8" width="0.7" height="3.8"/><rect x="1.9" y="0" width="0.7" height="2"/><circle cx="-1" cy="-1" r="0.7"/><rect x="0" y="-1.3" width="2.6" height="1.2"/></g>
<path d="M379.7 196.8 L385.0 203.9 L390.3 196.8Z" fill="rgba(110,110,110,0.22)"/>
<path d="M380.0 196.6 L385.0 203.3 L390.0 196.6Z" fill="#fff"/>
<circle cx="385" cy="194" r="5.7" fill="#fff"/>
<circle cx="385" cy="194" r="5.0" fill="#f23cb9"/>
<g transform="translate(385 194) scale(1.12)" fill="#fff" stroke="none"><rect x="-2.6" y="-0.2" width="5.2" height="1.5"/><rect x="-2.6" y="-1.8" width="0.7" height="3.8"/><rect x="1.9" y="0" width="0.7" height="2"/><circle cx="-1" cy="-1" r="0.7"/><rect x="0" y="-1.3" width="2.6" height="1.2"/></g>
<path d="M505.7 93.8 L511.0 100.9 L516.3 93.8Z" fill="rgba(110,110,110,0.22)"/>
<path d="M506.0 93.6 L511.0 100.3 L516.0 93.6Z" fill="#fff"/>
<circle cx="511" cy="91" r="5.7" fill="#fff"/>
<circle cx="511" cy="91" r="5.0" fill="#78909c"/>
<g transform="translate(511 91) scale(1.12)" fill="#fff" stroke="none"><path d="M-2.3 -2.3h2.65v0.7h-1.95v1.25h1.95v0.7h-2.65z M2.3 2.3h-2.65v-0.7h1.95v-1.25h-1.95v-0.7h2.65z M-0.35 -2.3h0.7v4.6h-0.7z M0.35 -2.3h1.95v2.65h-0.7v-1.95h-1.25z M-0.35 2.3h-1.95v-2.65h0.7v1.95h1.25z"/></g>
<path d="M522.7 62.8 L528.0 69.9 L533.3 62.8Z" fill="rgba(110,110,110,0.22)"/>
<path d="M523.0 62.6 L528.0 69.3 L533.0 62.6Z" fill="#fff"/>
<circle cx="528" cy="60" r="5.7" fill="#fff"/>
<circle cx="528" cy="60" r="5.0" fill="#a557f0"/>
<g transform="translate(528 60) scale(1.12)" fill="#fff" stroke="none"><path d="M-2.6 -0.8 L0 -2.6 L2.6 -0.8z"/><rect x="-2.2" y="-0.4" width="0.8" height="2"/><rect x="-0.4" y="-0.4" width="0.8" height="2"/><rect x="1.4" y="-0.4" width="0.8" height="2"/><rect x="-2.6" y="1.8" width="5.2" height="0.7"/></g>
<path d="M562.2 101.8 L567.5 108.9 L572.8 101.8Z" fill="rgba(110,110,110,0.22)"/>
<path d="M562.5 101.6 L567.5 108.3 L572.5 101.6Z" fill="#fff"/>
<circle cx="567.5" cy="99" r="5.7" fill="#fff"/>
<circle cx="567.5" cy="99" r="5.0" fill="#78909c"/>
<g transform="translate(567.5 99) scale(1.12)" fill="#fff" stroke="none"><path d="M-2.3 -2.3h2.65v0.7h-1.95v1.25h1.95v0.7h-2.65z M2.3 2.3h-2.65v-0.7h1.95v-1.25h-1.95v-0.7h2.65z M-0.35 -2.3h0.7v4.6h-0.7z M0.35 -2.3h1.95v2.65h-0.7v-1.95h-1.25z M-0.35 2.3h-1.95v-2.65h0.7v1.95h1.25z"/></g>
<path d="M667.9 89.5 L673.2 96.6 L678.5 89.5Z" fill="rgba(110,110,110,0.22)"/>
<path d="M668.2 89.3 L673.2 96.0 L678.2 89.3Z" fill="#fff"/>
<circle cx="673.2" cy="86.7" r="5.7" fill="#fff"/>
<circle cx="673.2" cy="86.7" r="5.0" fill="#78909c"/>
<g transform="translate(673.2 86.7) scale(1.12)" fill="#fff" stroke="none"><rect x="-2.6" y="-2.2" width="5.2" height="0.8"/><rect x="-2" y="-0.8" width="4" height="0.6"/><rect x="-1.6" y="-1.6" width="0.7" height="4"/><rect x="0.9" y="-1.6" width="0.7" height="4"/></g>
<path d="M492.7 171.8 L498.0 178.9 L503.3 171.8Z" fill="rgba(110,110,110,0.22)"/>
<path d="M493.0 171.6 L498.0 178.3 L503.0 171.6Z" fill="#fff"/>
<circle cx="498" cy="169" r="5.7" fill="#fff"/>
<circle cx="498" cy="169" r="5.0" fill="#78909c"/>
<g transform="translate(498 169) scale(1.12)" fill="#fff" stroke="none"><rect x="-2.6" y="-2.2" width="5.2" height="0.8"/><rect x="-2" y="-0.8" width="4" height="0.6"/><rect x="-1.6" y="-1.6" width="0.7" height="4"/><rect x="0.9" y="-1.6" width="0.7" height="4"/></g>
<path d="M632.4 153.0 L637.7 160.1 L643.0 153.0Z" fill="rgba(110,110,110,0.22)"/>
<path d="M632.7 152.8 L637.7 159.5 L642.7 152.8Z" fill="#fff"/>
<circle cx="637.7" cy="150.2" r="5.7" fill="#fff"/>
<circle cx="637.7" cy="150.2" r="5.0" fill="#f5821f"/>
<g transform="translate(637.7 150.2) scale(1.12)" fill="#fff" stroke="none"><rect x="-2" y="-1.6" width="3.4" height="2.6" rx="0.4"/><rect x="-2.4" y="1.5" width="4.6" height="0.6"/><path d="M1.4 -1.2 h0.8 v1.4 h-0.8" fill="none" stroke="#fff" stroke-width="0.5"/></g>
<path d="M704.6 64.8 L709.9 71.9 L715.2 64.8Z" fill="rgba(110,110,110,0.22)"/>
<path d="M704.9 64.6 L709.9 71.3 L714.9 64.6Z" fill="#fff"/>
<circle cx="709.9" cy="62" r="5.7" fill="#fff"/>
<circle cx="709.9" cy="62" r="5.0" fill="#78909c"/>
<text x="44" y="30.8" font-size="6.2" fill="#2f3338" font-weight="normal" text-anchor="start" stroke="#fff" stroke-width="1.6" stroke-linejoin="round" paint-order="stroke" stroke-opacity="0.85" >花屋町通</text>
<text x="122" y="33.1" font-size="6.6" fill="#2f3338" font-weight="normal" text-anchor="start" stroke="#fff" stroke-width="1.6" stroke-linejoin="round" paint-order="stroke" stroke-opacity="0.85" letter-spacing="0.9">朱雀分木町</text>
<text x="185" y="37.2" font-size="6.6" fill="#5c7480" font-weight="normal" text-anchor="start" stroke="#fff" stroke-width="1.6" stroke-linejoin="round" paint-order="stroke" stroke-opacity="0.85" letter-spacing="0.6">西本願寺(龍谷山本願寺)</text>
<text x="201" y="49.0" font-size="6.2" fill="#2f3338" font-weight="normal" text-anchor="middle" stroke="#fff" stroke-width="1.6" stroke-linejoin="round" paint-order="stroke" stroke-opacity="0.85" >壬</text>
<text x="201" y="55.076" font-size="6.2" fill="#2f3338" font-weight="normal" text-anchor="middle" stroke="#fff" stroke-width="1.6" stroke-linejoin="round" paint-order="stroke" stroke-opacity="0.85" >生</text>
<text x="201" y="61.152" font-size="6.2" fill="#2f3338" font-weight="normal" text-anchor="middle" stroke="#fff" stroke-width="1.6" stroke-linejoin="round" paint-order="stroke" stroke-opacity="0.85" >川</text>
<text x="201" y="67.22800000000001" font-size="6.2" fill="#2f3338" font-weight="normal" text-anchor="middle" stroke="#fff" stroke-width="1.6" stroke-linejoin="round" paint-order="stroke" stroke-opacity="0.85" >通</text>
<text x="239.5" y="51.0" font-size="6.2" fill="#2f3338" font-weight="normal" text-anchor="middle" stroke="#fff" stroke-width="1.6" stroke-linejoin="round" paint-order="stroke" stroke-opacity="0.85" >大</text>
<text x="239.5" y="57.076" font-size="6.2" fill="#2f3338" font-weight="normal" text-anchor="middle" stroke="#fff" stroke-width="1.6" stroke-linejoin="round" paint-order="stroke" stroke-opacity="0.85" >宮</text>
<text x="239.5" y="63.152" font-size="6.2" fill="#2f3338" font-weight="normal" text-anchor="middle" stroke="#fff" stroke-width="1.6" stroke-linejoin="round" paint-order="stroke" stroke-opacity="0.85" >通</text>
<text x="84" y="71" font-size="6.7" fill="#e23eb6" font-weight="normal" text-anchor="start" stroke="#fff" stroke-width="1.6" stroke-linejoin="round" paint-order="stroke" stroke-opacity="0.85" letter-spacing="0.5">ホテル エミオン 京都</text>
<text x="123" y="86.8" font-size="6.3" fill="#2f3338" font-weight="normal" text-anchor="start" stroke="#fff" stroke-width="1.6" stroke-linejoin="round" paint-order="stroke" stroke-opacity="0.85" letter-spacing="0.4">梅小路京都西</text>
<text x="99" y="105.3" font-size="6.6" fill="#9657e6" font-weight="normal" text-anchor="start" stroke="#fff" stroke-width="1.6" stroke-linejoin="round" paint-order="stroke" stroke-opacity="0.85" letter-spacing="0.4">京都鉄道博物館</text>
<text x="173" y="100.3" font-size="6.6" fill="#9657e6" font-weight="normal" text-anchor="start" stroke="#fff" stroke-width="1.6" stroke-linejoin="round" paint-order="stroke" stroke-opacity="0.85" letter-spacing="0.4">京都水族館</text>
<text x="11" y="104.0" font-size="6" fill="#2f3338" font-weight="normal" text-anchor="middle" stroke="#fff" stroke-width="1.6" stroke-linejoin="round" paint-order="stroke" stroke-opacity="0.85" >佐</text>
<text x="11" y="109.88" font-size="6" fill="#2f3338" font-weight="normal" text-anchor="middle" stroke="#fff" stroke-width="1.6" stroke-linejoin="round" paint-order="stroke" stroke-opacity="0.85" >井</text>
<text x="11" y="115.76" font-size="6" fill="#2f3338" font-weight="normal" text-anchor="middle" stroke="#fff" stroke-width="1.6" stroke-linejoin="round" paint-order="stroke" stroke-opacity="0.85" >通</text>
<text x="46" y="156.3" font-size="6.2" fill="#2f3338" font-weight="normal" text-anchor="start" stroke="#fff" stroke-width="1.6" stroke-linejoin="round" paint-order="stroke" stroke-opacity="0.85" >八条通</text>
<text x="112" y="135" font-size="6" fill="#2f3338" font-weight="normal" text-anchor="middle" stroke="#fff" stroke-width="1.6" stroke-linejoin="round" paint-order="stroke" stroke-opacity="0.85" transform="rotate(-37 112 133)">梅小路通</text>
<text x="166" y="119" font-size="5.6" fill="#444" font-weight="normal" text-anchor="start" stroke="#fff" stroke-width="1.6" stroke-linejoin="round" paint-order="stroke" stroke-opacity="0.85" transform="rotate(52 179 113)">山陰本線</text>
<text x="147" y="141.8" font-size="6.6" fill="#5c7480" font-weight="normal" text-anchor="start" stroke="#fff" stroke-width="1.6" stroke-linejoin="round" paint-order="stroke" stroke-opacity="0.85" letter-spacing="0.8">六孫王神社</text>
<text x="154" y="164.2" font-size="6.4" fill="#2f3338" font-weight="normal" text-anchor="start" stroke="#fff" stroke-width="1.6" stroke-linejoin="round" paint-order="stroke" stroke-opacity="0.85" letter-spacing="1">八条源町</text>
<text x="127" y="191.2" font-size="6.2" fill="#2f3338" font-weight="normal" text-anchor="start" stroke="#fff" stroke-width="1.6" stroke-linejoin="round" paint-order="stroke" stroke-opacity="0.85" letter-spacing="0.6">東寺西門通</text>
<text x="203" y="188.0" font-size="5.8" fill="#2f3338" font-weight="normal" text-anchor="middle" stroke="#fff" stroke-width="1.6" stroke-linejoin="round" paint-order="stroke" stroke-opacity="0.85" >壬</text>
<text x="203" y="193.684" font-size="5.8" fill="#2f3338" font-weight="normal" text-anchor="middle" stroke="#fff" stroke-width="1.6" stroke-linejoin="round" paint-order="stroke" stroke-opacity="0.85" >生</text>
<text x="203" y="199.368" font-size="5.8" fill="#2f3338" font-weight="normal" text-anchor="middle" stroke="#fff" stroke-width="1.6" stroke-linejoin="round" paint-order="stroke" stroke-opacity="0.85" >通</text>
<text x="215" y="197.3" font-size="6.4" fill="#2f3338" font-weight="normal" text-anchor="start" stroke="#fff" stroke-width="1.6" stroke-linejoin="round" paint-order="stroke" stroke-opacity="0.85" letter-spacing="0.6">九条町</text>
<text x="229" y="170.3" font-size="6.6" fill="#3f82ee" font-weight="normal" text-anchor="start" stroke="#fff" stroke-width="1.6" stroke-linejoin="round" paint-order="stroke" stroke-opacity="0.85" letter-spacing="0.35">イオンモールKYOTO</text>
<text x="251" y="149.5" font-size="5.8" fill="#2b9aa6" font-weight="normal" text-anchor="start" stroke="#fff" stroke-width="1.6" stroke-linejoin="round" paint-order="stroke" stroke-opacity="0.85" >東海道新幹線</text>
<text x="315.6" y="49.0" font-size="6.6" fill="#5c7480" font-weight="normal" text-anchor="start" stroke="#fff" stroke-width="1.6" stroke-linejoin="round" paint-order="stroke" stroke-opacity="0.85" letter-spacing="0.4">東本願寺</text>
<text x="290" y="99.3" font-size="6.6" fill="#5a6a9a" font-weight="normal" text-anchor="start" stroke="#fff" stroke-width="1.6" stroke-linejoin="round" paint-order="stroke" stroke-opacity="0.85" letter-spacing="0.45">ニデック京都タワー</text>
<text x="317" y="111.8" font-size="6.2" fill="#2f3338" font-weight="normal" text-anchor="start" stroke="#fff" stroke-width="1.6" stroke-linejoin="round" paint-order="stroke" stroke-opacity="0.85" letter-spacing="0.3">塩小路通</text>
<text x="321.2" y="131.1" font-size="6.4" fill="#5a5a5a" font-weight="normal" text-anchor="start" stroke="#fff" stroke-width="1.6" stroke-linejoin="round" paint-order="stroke" stroke-opacity="0.85" >京都</text>
<text x="326.4" y="152.2" font-size="6.8" fill="#e23eb6" font-weight="normal" text-anchor="start" stroke="#fff" stroke-width="1.6" stroke-linejoin="round" paint-order="stroke" stroke-opacity="0.85" letter-spacing="0.5">都ホテル 京都八条</text>
<text x="303" y="197.3" font-size="6.8" fill="#e23eb6" font-weight="normal" text-anchor="start" stroke="#fff" stroke-width="1.6" stroke-linejoin="round" paint-order="stroke" stroke-opacity="0.85" letter-spacing="0.45">ホテル京阪 京都八条口</text>
<text x="408" y="47.8" font-size="6.5" fill="#3c8a5a" font-weight="normal" text-anchor="middle" stroke="#fff" stroke-width="1.6" stroke-linejoin="round" paint-order="stroke" stroke-opacity="0.85" >渉成園</text>
<text x="408" y="55" font-size="6.3" fill="#3c8a5a" font-weight="normal" text-anchor="middle" stroke="#fff" stroke-width="1.6" stroke-linejoin="round" paint-order="stroke" stroke-opacity="0.85" >(枳殻邸)</text>
<text x="403" y="89.5" font-size="6" fill="#2f3338" font-weight="normal" text-anchor="middle" stroke="#fff" stroke-width="1.6" stroke-linejoin="round" paint-order="stroke" stroke-opacity="0.85" >間</text>
<text x="403" y="95.38" font-size="6" fill="#2f3338" font-weight="normal" text-anchor="middle" stroke="#fff" stroke-width="1.6" stroke-linejoin="round" paint-order="stroke" stroke-opacity="0.85" >之</text>
<text x="403" y="101.26" font-size="6" fill="#2f3338" font-weight="normal" text-anchor="middle" stroke="#fff" stroke-width="1.6" stroke-linejoin="round" paint-order="stroke" stroke-opacity="0.85" >町</text>
<text x="425" y="112.3" font-size="6.4" fill="#2f3338" font-weight="normal" text-anchor="start" stroke="#fff" stroke-width="1.6" stroke-linejoin="round" paint-order="stroke" stroke-opacity="0.85" letter-spacing="0.3">塩小路通</text>
<text x="447.5" y="72.8" font-size="6.2" fill="#2f3338" font-weight="normal" text-anchor="start" stroke="#fff" stroke-width="1.6" stroke-linejoin="round" paint-order="stroke" stroke-opacity="0.85" >七条</text>
<text x="450.5" y="91" font-size="6.5" fill="#5c7480" font-weight="normal" text-anchor="start" stroke="#fff" stroke-width="1.6" stroke-linejoin="round" paint-order="stroke" stroke-opacity="0.85" letter-spacing="0.55">三十三間堂(蓮華</text>
<text x="449" y="98.2" font-size="6.5" fill="#5c7480" font-weight="normal" text-anchor="start" stroke="#fff" stroke-width="1.6" stroke-linejoin="round" paint-order="stroke" stroke-opacity="0.85" letter-spacing="0.55">王院 三十三間堂)</text>
<text x="536" y="32.3" font-size="7" fill="#2f3338" font-weight="normal" text-anchor="start" stroke="#fff" stroke-width="1.6" stroke-linejoin="round" paint-order="stroke" stroke-opacity="0.85" letter-spacing="1.2">東山区</text>
<text x="536" y="63.3" font-size="6.6" fill="#9657e6" font-weight="normal" text-anchor="start" stroke="#fff" stroke-width="1.6" stroke-linejoin="round" paint-order="stroke" stroke-opacity="0.85" letter-spacing="0.5">京都国立博物館</text>
<text x="575" y="102.3" font-size="6.6" fill="#5c7480" font-weight="normal" text-anchor="start" stroke="#fff" stroke-width="1.6" stroke-linejoin="round" paint-order="stroke" stroke-opacity="0.85" letter-spacing="0.25">総本山 智積院</text>
<text x="566" y="117.5" font-size="6" fill="#2f3338" font-weight="normal" text-anchor="middle" stroke="#fff" stroke-width="1.6" stroke-linejoin="round" paint-order="stroke" stroke-opacity="0.85" transform="rotate(20 566 115.5)">日吉南通</text>
<text x="516.4" y="136.8" font-size="5.9" fill="#2b9aa6" font-weight="normal" text-anchor="start" stroke="#fff" stroke-width="1.6" stroke-linejoin="round" paint-order="stroke" stroke-opacity="0.85" transform="rotate(1 535 135)">東海道新幹線</text>
<text x="462.2" y="171.8" font-size="6.6" fill="#5c7480" font-weight="normal" text-anchor="start" stroke="#fff" stroke-width="1.6" stroke-linejoin="round" paint-order="stroke" stroke-opacity="0.85" letter-spacing="0.3">瀧尾神社</text>
<text x="460.5" y="196.3" font-size="6.2" fill="#2f3338" font-weight="normal" text-anchor="start" stroke="#fff" stroke-width="1.6" stroke-linejoin="round" paint-order="stroke" stroke-opacity="0.85" >東福寺</text>
<text x="644.8" y="90.3" font-size="6.5" fill="#5c7480" font-weight="normal" text-anchor="start" stroke="#fff" stroke-width="1.6" stroke-linejoin="round" paint-order="stroke" stroke-opacity="0.85" letter-spacing="0.2">豊国廟</text>
<text x="682.4" y="64.8" font-size="6.4" fill="#5c7480" font-weight="normal" text-anchor="start" stroke="#fff" stroke-width="1.6" stroke-linejoin="round" paint-order="stroke" stroke-opacity="0.85" letter-spacing="0.6">清閑寺</text>
<text x="661" y="110.6" font-size="6.0" fill="#444" font-weight="normal" text-anchor="start" stroke="#fff" stroke-width="1.6" stroke-linejoin="round" paint-order="stroke" stroke-opacity="0.85" transform="rotate(-7 661 108.5)" letter-spacing="0.2">湖西線=琵琶湖線</text>
<text x="646" y="153.3" font-size="6.8" fill="#f07b1a" font-weight="normal" text-anchor="start" stroke="#fff" stroke-width="1.6" stroke-linejoin="round" paint-order="stroke" stroke-opacity="0.85" letter-spacing="0.4">花と果樹の東山ガー</text>
<text x="97" y="63" font-size="4.0" fill="#5a5f66" font-weight="normal" text-anchor="start"  >北小路通</text>
<text x="293.6" y="47.2" font-size="4.0" fill="#5a5f66" font-weight="normal" text-anchor="start"  >正面通</text>
<text x="293.6" y="62.5" font-size="4.0" fill="#5a5f66" font-weight="normal" text-anchor="start"  >北小路通</text>
<text x="264" y="89" font-size="4.0" fill="#5a5f66" font-weight="normal" text-anchor="start"  >下魚棚通</text>
<text x="91" y="118.5" font-size="4.0" fill="#5a5f66" font-weight="normal" text-anchor="start"  >西塩小路通</text>
<text x="627" y="54.5" font-size="4.0" fill="#5a5f66" font-weight="normal" text-anchor="start"  >渋谷通</text>
<text x="548" y="77" font-size="4.0" fill="#5a5f66" font-weight="normal" text-anchor="start"  >渋谷</text>
<text x="152" y="146" font-size="4.0" fill="#5a5f66" font-weight="normal" text-anchor="start"  >八条通</text>
<text x="168" y="161" font-size="4.0" fill="#5a5f66" font-weight="normal" text-anchor="start"  >針小路通</text>
<text x="390" y="47" font-size="4.0" fill="#5a5f66" font-weight="normal" text-anchor="start"  >正面通</text>
<text x="206" y="31" font-size="4.0" fill="#5a5f66" font-weight="normal" text-anchor="start"  >花屋町通</text>
<text x="207" y="48.5" font-size="4.0" fill="#5a5f66" font-weight="normal" text-anchor="start"  >北小路通</text>
<text x="149.5" y="46.0" font-size="3.9" fill="#5a5f66" font-weight="normal" text-anchor="middle"  >坊</text>
<text x="149.5" y="49.9" font-size="3.9" fill="#5a5f66" font-weight="normal" text-anchor="middle"  >城</text>
<text x="149.5" y="53.8" font-size="3.9" fill="#5a5f66" font-weight="normal" text-anchor="middle"  >通</text>
<text x="25" y="84.0" font-size="3.9" fill="#5a5f66" font-weight="normal" text-anchor="middle"  >御</text>
<text x="25" y="87.9" font-size="3.9" fill="#5a5f66" font-weight="normal" text-anchor="middle"  >前</text>
<text x="25" y="91.8" font-size="3.9" fill="#5a5f66" font-weight="normal" text-anchor="middle"  >通</text>
<text x="64.5" y="98.0" font-size="3.9" fill="#5a5f66" font-weight="normal" text-anchor="middle"  >七</text>
<text x="64.5" y="101.9" font-size="3.9" fill="#5a5f66" font-weight="normal" text-anchor="middle"  >本</text>
<text x="64.5" y="105.8" font-size="3.9" fill="#5a5f66" font-weight="normal" text-anchor="middle"  >松</text>
<text x="47.5" y="101.0" font-size="3.9" fill="#5a5f66" font-weight="normal" text-anchor="middle"  >西</text>
<text x="47.5" y="104.9" font-size="3.9" fill="#5a5f66" font-weight="normal" text-anchor="middle"  >土</text>
<text x="47.5" y="108.8" font-size="3.9" fill="#5a5f66" font-weight="normal" text-anchor="middle"  >居</text>
<text x="47.5" y="112.7" font-size="3.9" fill="#5a5f66" font-weight="normal" text-anchor="middle"  >通</text>
<text x="222.5" y="64.0" font-size="3.9" fill="#5a5f66" font-weight="normal" text-anchor="middle"  >猪</text>
<text x="222.5" y="67.9" font-size="3.9" fill="#5a5f66" font-weight="normal" text-anchor="middle"  >熊</text>
<text x="222.5" y="71.8" font-size="3.9" fill="#5a5f66" font-weight="normal" text-anchor="middle"  >通</text>
<text x="259.5" y="84.0" font-size="3.9" fill="#5a5f66" font-weight="normal" text-anchor="middle"  >醒</text>
<text x="259.5" y="87.9" font-size="3.9" fill="#5a5f66" font-weight="normal" text-anchor="middle"  >ヶ</text>
<text x="259.5" y="91.8" font-size="3.9" fill="#5a5f66" font-weight="normal" text-anchor="middle"  >井</text>
<text x="251.5" y="95.0" font-size="3.9" fill="#5a5f66" font-weight="normal" text-anchor="middle"  >黒</text>
<text x="251.5" y="98.9" font-size="3.9" fill="#5a5f66" font-weight="normal" text-anchor="middle"  >門</text>
<text x="251.5" y="102.8" font-size="3.9" fill="#5a5f66" font-weight="normal" text-anchor="middle"  >通</text>
<text x="276" y="96.0" font-size="3.9" fill="#5a5f66" font-weight="normal" text-anchor="middle"  >西</text>
<text x="276" y="99.9" font-size="3.9" fill="#5a5f66" font-weight="normal" text-anchor="middle"  >洞</text>
<text x="276" y="103.8" font-size="3.9" fill="#5a5f66" font-weight="normal" text-anchor="middle"  >院</text>
<text x="312" y="52.0" font-size="3.9" fill="#5a5f66" font-weight="normal" text-anchor="middle"  >新</text>
<text x="312" y="55.9" font-size="3.9" fill="#5a5f66" font-weight="normal" text-anchor="middle"  >町</text>
<text x="312" y="59.8" font-size="3.9" fill="#5a5f66" font-weight="normal" text-anchor="middle"  >通</text>
<text x="10.8" y="163.0" font-size="3.9" fill="#5a5f66" font-weight="normal" text-anchor="middle"  >佐</text>
<text x="10.8" y="166.9" font-size="3.9" fill="#5a5f66" font-weight="normal" text-anchor="middle"  >井</text>
<text x="10.8" y="170.8" font-size="3.9" fill="#5a5f66" font-weight="normal" text-anchor="middle"  >西</text>
<text x="66" y="187.0" font-size="3.9" fill="#5a5f66" font-weight="normal" text-anchor="middle"  >千</text>
<text x="66" y="190.9" font-size="3.9" fill="#5a5f66" font-weight="normal" text-anchor="middle"  >本</text>
<text x="66" y="194.8" font-size="3.9" fill="#5a5f66" font-weight="normal" text-anchor="middle"  >通</text>
<text x="375" y="87.0" font-size="3.9" fill="#5a5f66" font-weight="normal" text-anchor="middle"  >不</text>
<text x="375" y="90.9" font-size="3.9" fill="#5a5f66" font-weight="normal" text-anchor="middle"  >明</text>
<text x="375" y="94.8" font-size="3.9" fill="#5a5f66" font-weight="normal" text-anchor="middle"  >門</text>
<text x="383.6" y="87.0" font-size="3.9" fill="#5a5f66" font-weight="normal" text-anchor="middle"  >東</text>
<text x="383.6" y="90.9" font-size="3.9" fill="#5a5f66" font-weight="normal" text-anchor="middle"  >洞</text>
<text x="383.6" y="94.8" font-size="3.9" fill="#5a5f66" font-weight="normal" text-anchor="middle"  >院</text>
<text x="427" y="45.0" font-size="3.9" fill="#5a5f66" font-weight="normal" text-anchor="middle"  >上</text>
<text x="427" y="48.9" font-size="3.9" fill="#5a5f66" font-weight="normal" text-anchor="middle"  >枳</text>
<text x="427" y="52.8" font-size="3.9" fill="#5a5f66" font-weight="normal" text-anchor="middle"  >殻</text>
<text x="427" y="56.7" font-size="3.9" fill="#5a5f66" font-weight="normal" text-anchor="middle"  >馬</text>
<text x="435" y="55.0" font-size="3.9" fill="#5a5f66" font-weight="normal" text-anchor="middle"  >木</text>
<text x="435" y="58.9" font-size="3.9" fill="#5a5f66" font-weight="normal" text-anchor="middle"  >屋</text>
<text x="435" y="62.8" font-size="3.9" fill="#5a5f66" font-weight="normal" text-anchor="middle"  >町</text>
<text x="443" y="58.0" font-size="3.9" fill="#5a5f66" font-weight="normal" text-anchor="middle"  >西</text>
<text x="443" y="61.9" font-size="3.9" fill="#5a5f66" font-weight="normal" text-anchor="middle"  >木</text>
<text x="443" y="65.8" font-size="3.9" fill="#5a5f66" font-weight="normal" text-anchor="middle"  >屋</text>
<text x="443" y="69.7" font-size="3.9" fill="#5a5f66" font-weight="normal" text-anchor="middle"  >町</text>
<text x="484" y="47.0" font-size="3.9" fill="#5a5f66" font-weight="normal" text-anchor="middle"  >大</text>
<text x="484" y="50.9" font-size="3.9" fill="#5a5f66" font-weight="normal" text-anchor="middle"  >和</text>
<text x="484" y="54.8" font-size="3.9" fill="#5a5f66" font-weight="normal" text-anchor="middle"  >大</text>
<text x="484" y="58.7" font-size="3.9" fill="#5a5f66" font-weight="normal" text-anchor="middle"  >路</text>
<text x="504" y="42.0" font-size="3.9" fill="#5a5f66" font-weight="normal" text-anchor="middle"  >本</text>
<text x="504" y="45.9" font-size="3.9" fill="#5a5f66" font-weight="normal" text-anchor="middle"  >町</text>
<text x="504" y="49.8" font-size="3.9" fill="#5a5f66" font-weight="normal" text-anchor="middle"  >通</text>
<text x="444" y="82.0" font-size="3.9" fill="#5a5f66" font-weight="normal" text-anchor="middle"  >鞘</text>
<text x="444" y="85.9" font-size="3.9" fill="#5a5f66" font-weight="normal" text-anchor="middle"  >町</text>
<text x="444" y="89.8" font-size="3.9" fill="#5a5f66" font-weight="normal" text-anchor="middle"  >通</text>
<text x="492" y="150.0" font-size="3.9" fill="#5a5f66" font-weight="normal" text-anchor="middle"  >本</text>
<text x="492" y="153.9" font-size="3.9" fill="#5a5f66" font-weight="normal" text-anchor="middle"  >町</text>
<text x="492" y="157.8" font-size="3.9" fill="#5a5f66" font-weight="normal" text-anchor="middle"  >通</text>
<text x="700" y="196.0" font-size="3.9" fill="#5a5f66" font-weight="normal" text-anchor="middle"  >今</text>
<text x="700" y="199.9" font-size="3.9" fill="#5a5f66" font-weight="normal" text-anchor="middle"  >熊</text>
<text x="700" y="203.8" font-size="3.9" fill="#5a5f66" font-weight="normal" text-anchor="middle"  >野</text>
<rect x="165.10000000000002" y="82.19999999999999" width="6.4" height="4.8" rx="1" fill="#fff"/><text x="168.3" y="86.19999999999999" font-size="4.4" font-weight="bold" font-style="italic" fill="#1a73e8" text-anchor="middle">JR</text>
<rect x="481.2" y="191.79999999999998" width="6.4" height="4.8" rx="1" fill="#fff"/><text x="484.4" y="195.79999999999998" font-size="4.4" font-weight="bold" font-style="italic" fill="#1a73e8" text-anchor="middle">JR</text>
<rect x="462.2" y="67.7" width="6" height="6" rx="1.3" fill="#37474f"/><rect x="463.4" y="68.8" width="3.6" height="3" rx="0.5" fill="#fff"/><rect x="463.59999999999997" y="72.2" width="3.2" height="0.6" fill="#fff"/>
<rect x="490.3" y="191.3" width="6" height="6" rx="1.3" fill="#37474f"/><rect x="491.5" y="192.4" width="3.6" height="3" rx="0.5" fill="#fff"/><rect x="491.7" y="195.8" width="3.2" height="0.6" fill="#fff"/>
<rect x="335" y="125.3" width="7.5" height="6.6" rx="1.5" fill="#fff"/><text x="338.8" y="130.4" font-size="4.4" font-weight="bold" font-style="italic" fill="#1a73e8" text-anchor="middle">JR</text>
<rect x="344.3" y="125.1" width="7.4" height="7.4" rx="2" fill="#5a2a3a"/><rect x="345.9" y="126.9" width="4.2" height="3.4" rx="0.8" fill="#fff"/>
<circle cx="357.5" cy="128.8" r="3.3" fill="#6a5ab0"/><circle cx="357.5" cy="128.8" r="1.3" fill="#fff"/>
<text x="365.2" y="130.4" font-size="4.4" font-weight="bold" font-style="italic" fill="#f08020" text-anchor="middle">JR</text>
<rect x="369.5" y="125.6" width="6.2" height="6.2" rx="0.8" fill="#fff" stroke="#333" stroke-width="0.8"/><path d="M372.6 125.6v6.2M369.5 128.7h6.2" stroke="#333" stroke-width="0.6"/>
<rect x="362.9" y="124.7" width="18.6" height="7.2" fill="rgba(255,130,40,0.4)"/>
<path d="M306.4 43.2 L418.6 43.2 L418.6 88.9 L437.2 88.9 L437.2 149.7 L418.6 149.7 L418.6 180.9 L381.2 180.9 L381.2 196.6 L343.7 196.6 L343.7 180.9 L306.4 180.9 L306.4 149.7 L287.8 149.7 L287.8 74.3 L306.4 74.3Z M362.5 74.3 L381.2 74.3 L381.2 164.9 L343.7 164.9 L343.7 149.7 L325.1 149.7 L325.1 120.2 L343.7 120.2 L343.7 104.8 L362.5 104.8Z" fill="rgba(40,167,69,0.55)" fill-rule="evenodd"/>
<path d="M362.5 74.3 L381.2 74.3 L381.2 164.9 L343.7 164.9 L343.7 149.7 L325.1 149.7 L325.1 120.2 L343.7 120.2 L343.7 104.8 L362.5 104.8Z M343.7 120.2 L362.5 120.2 L362.5 149.7 L343.7 149.7Z" fill="rgba(250,190,41,0.62)" fill-rule="evenodd"/>
<path d="M343.7 120.2 L362.5 120.2 L362.5 149.7 L343.7 149.7Z" fill="rgba(246,0,0,0.62)"/>
<circle cx="359" cy="115.3" r="66.3" fill="none" stroke="#3fb25a" stroke-width="0.9"/>
<rect x="10.4" y="29" width="34.3" height="37.4" fill="#fff" stroke="#5fbd74" stroke-width="0.9"/>
<rect x="10.8" y="29.4" width="33.5" height="8.4" fill="#d8efdd"/>
<line x1="10.4" y1="37.9" x2="44.7" y2="37.9" stroke="#9dd6aa" stroke-width="0.6"/>
<text x="27.5" y="35.1" font-size="5.1" font-weight="bold" fill="#22332a" text-anchor="middle">滞在人口</text>
<rect x="15.1" y="40.9" width="4.8" height="4.8" fill="#ff0000"/>
<text x="22.7" y="45.199999999999996" font-size="5" fill="#333">多い</text>
<rect x="15.1" y="49.5" width="4.8" height="4.8" fill="#ffa500"/>
<text x="22.7" y="53.8" font-size="5" fill="#333">普通</text>
<rect x="15.1" y="57.6" width="4.8" height="4.8" fill="#22a045"/>
<text x="22.7" y="61.9" font-size="5" fill="#333">少ない</text>
<rect x="617" y="29" width="29.6" height="12" rx="1" fill="#fff"/>
<text x="624.5" y="37.3" font-size="5.6" font-weight="bold" fill="#222">地図</text>
<path d="M638.8 34 h3.2 l-1.6 2z" fill="#666"/>
<rect x="694" y="28.8" width="12.4" height="12.3" rx="1" fill="#fff"/>
<circle cx="700.2" cy="31.4" r="1.7" fill="#f7b422"/><path d="M697.5 33.4 q2.7 -0.9 5.4 0 l-0.5 3.4 h-0.7 l-0.3 3.6 h-2.4 l-0.3 -3.6 h-0.7z" fill="#f2a81a"/>
<circle cx="700" cy="52.3" r="5.8" fill="#fff"/>
<path d="M700 48.4 l1.3 1.6 h-2.6z M700 56.2 l1.3 -1.6 h-2.6z M696.1 52.3 l1.6 -1.3 v2.6z M703.9 52.3 l-1.6 -1.3 v2.6z" fill="#666"/>
<rect x="694.2" y="64" width="12.2" height="11.6" rx="1" fill="#fff"/>
<path d="M696.9 69 v-2.3 h2.6 M701.3 66.7 h2.6 v2.3 M703.9 70.8 v2.3 h-2.6 M699.5 73.1 h-2.6 v-2.3" fill="none" stroke="#3cba54" stroke-width="1.6"/>
<rect x="458" y="199" width="252" height="7" fill="rgba(245,245,245,0.75)"/>
<text x="459.5" y="204.5" font-size="5" fill="#222">キーボード ショートカット</text>
<text x="528.5" y="204.5" font-size="5" fill="#222">地図データ ©2025</text>
<text x="577.5" y="204.5" font-size="5" fill="#222">200 m</text>
<text x="628" y="204.5" font-size="5" fill="#222">利用規約</text>
<text x="654.5" y="204.5" font-size="5" fill="#222">地図の誤りを報告する</text>
<path d="M594 201.5 v3 h27 v-3" fill="none" stroke="#222" stroke-width="0.9"/>
<g stroke="#fff" stroke-width="1.2" paint-order="stroke" font-size="8.9" font-weight="bold">
<text x="12.0" y="200.6" fill="#4285f4">G</text>
<text x="18.8" y="200.6" fill="#ea4335">o</text>
<text x="24.1" y="200.6" fill="#fbbc05">o</text>
<text x="29.3" y="200.6" fill="#4285f4">g</text>
<text x="34.5" y="200.6" fill="#34a853">l</text>
<text x="36.9" y="200.6" fill="#ea4335">e</text>
</g>
</g>
<rect x="6.75" y="25.25" width="702.7" height="180.9" fill="none" stroke="#9e9e9e" stroke-width="0.6"/>
</svg>
<div class="a" style="left:203.50px;top:215.15px;font-size:6.2px;line-height:6.2px;color:#212529;font-weight:bold;">商圏</div>
<div class="box" style="left:228px;top:210.2px;width:54.7px;height:14.4px;background:#e9ecef;border:1px solid #ced4da;border-radius:2px;"></div>
<div class="a" style="left:230.80px;top:215.20px;font-size:6.1px;line-height:6.1px;color:#495057;font-weight:normal;">円</div>
<svg width="984" height="440" viewBox="0 0 984 440" style="pointer-events:none"><path d="M273.2 216.2 l2.9 2.9 l2.9 -2.9" fill="none" stroke="#343a40" stroke-width="0.9"/></svg>
<div class="box" style="left:285px;top:210.2px;width:32.6px;height:14.4px;background:#e9ecef;border:1px solid #ced4da;border-radius:2px;"></div>
<div class="a" style="left:298.60px;top:214.80px;font-size:6.5px;line-height:6.5px;color:#495057;font-weight:normal;">0.5</div>
<div class="a" style="left:320.00px;top:214.85px;font-size:6.4px;line-height:6.4px;color:#212529;font-weight:normal;">km</div>
<div class="box" style="left:479px;top:210.2px;width:34px;height:14.6px;background:#007bff;border-radius:2px;"></div>
<div class="a" style="left:483.90px;top:215.20px;font-size:6.3px;line-height:6.3px;color:#fff;font-weight:normal;">商圏設定</div>
<div class="a" style="left:724.70px;top:33.83px;font-size:6.05px;line-height:6.05px;color:#212529;font-weight:bold;">集計方法</div>
<div class="a" style="left:768.00px;top:33.54px;font-size:6.63px;line-height:6.63px;color:#212529;font-weight:normal;">全人口推計値</div>
<div class="a" style="left:724.70px;top:52.62px;font-size:6.05px;line-height:6.05px;color:#212529;font-weight:bold;">データ期間</div>
<div class="box" style="left:768px;top:48.3px;width:49.6px;height:14.8px;border:1px solid #ced4da;border-radius:2px 0 0 2px;background:#fff;"></div><div class="box" style="left:816.6px;top:48.3px;width:17px;height:14.8px;border:1px solid #9aa0a6;border-radius:0 2px 2px 0;background:#fff;"></div><div class="a" style="left:771.00px;top:52.73px;font-size:6.05px;line-height:6.05px;color:#495057;font-weight:normal;">2025-08-21</div><svg width="984" height="440" viewBox="0 0 984 440"><rect x="822.6" y="53.0" width="6" height="5.8" rx="0.8" fill="none" stroke="#6c757d" stroke-width="0.8"/><rect x="822.6" y="53.0" width="6" height="1.5" fill="#6c757d"/><path d="M824.0 52.0v1.4M827.2 52.0v1.4" stroke="#6c757d" stroke-width="0.8"/></svg>
<svg width="984" height="440" viewBox="0 0 984 440"><path d="M838.2 55.9 q1.4 -2.2 2.9 -0.9 t2.9 -0.9" fill="none" stroke="#333" stroke-width="0.75"/></svg>
<div class="box" style="left:848.3px;top:48.3px;width:49.6px;height:14.8px;border:1px solid #ced4da;border-radius:2px 0 0 2px;background:#fff;"></div><div class="box" style="left:896.9px;top:48.3px;width:17px;height:14.8px;border:1px solid #9aa0a6;border-radius:0 2px 2px 0;background:#fff;"></div><div class="a" style="left:851.30px;top:52.73px;font-size:6.05px;line-height:6.05px;color:#495057;font-weight:normal;">2025-09-21</div><svg width="984" height="440" viewBox="0 0 984 440"><rect x="902.9" y="53.0" width="6" height="5.8" rx="0.8" fill="none" stroke="#6c757d" stroke-width="0.8"/><rect x="902.9" y="53.0" width="6" height="1.5" fill="#6c757d"/><path d="M904.3 52.0v1.4M907.5 52.0v1.4" stroke="#6c757d" stroke-width="0.8"/></svg>
<div class="a" style="left:724.70px;top:70.82px;font-size:6.05px;line-height:6.05px;color:#212529;font-weight:bold;">訪日回数</div>
<div class="cb" style="left:767.5px;top:69.2px;"></div>
<div class="a" style="left:777.90px;top:70.82px;font-size:6.05px;line-height:6.05px;color:#212529;font-weight:normal;">初回</div>
<div class="cb" style="left:800.5px;top:69.2px;"></div>
<div class="a" style="left:810.60px;top:70.82px;font-size:6.05px;line-height:6.05px;color:#212529;font-weight:normal;">2回目以降</div>
<div class="a" style="left:724.70px;top:89.82px;font-size:6.05px;line-height:6.05px;color:#212529;font-weight:bold;">国籍</div>
<div class="cb" style="left:767.2px;top:88.25px;"></div>
<div class="a" style="left:777.80px;top:89.82px;font-size:6.05px;line-height:6.05px;color:#212529;font-weight:normal;">韓国</div>
<div class="cb" style="left:818.4px;top:88.25px;"></div>
<div class="a" style="left:829.00px;top:89.82px;font-size:6.05px;line-height:6.05px;color:#212529;font-weight:normal;">中国</div>
<div class="cb" style="left:869.1px;top:88.25px;"></div>
<div class="a" style="left:879.70px;top:89.82px;font-size:6.05px;line-height:6.05px;color:#212529;font-weight:normal;">台湾</div>
<div class="cb" style="left:920.1px;top:88.25px;"></div>
<div class="a" style="left:930.70px;top:89.82px;font-size:6.05px;line-height:6.05px;color:#212529;font-weight:normal;">香港</div>
<div class="cb" style="left:767.2px;top:98.27px;"></div>
<div class="a" style="left:777.80px;top:99.84px;font-size:6.05px;line-height:6.05px;color:#212529;font-weight:normal;">タイ</div>
<div class="cb" style="left:818.4px;top:98.27px;"></div>
<div class="a" style="left:829.00px;top:99.84px;font-size:6.05px;line-height:6.05px;color:#212529;font-weight:normal;">シンガポール</div>
<div class="cb" style="left:869.1px;top:98.27px;"></div>
<div class="a" style="left:879.70px;top:99.84px;font-size:6.05px;line-height:6.05px;color:#212529;font-weight:normal;">マレーシア</div>
<div class="cb" style="left:920.1px;top:98.27px;"></div>
<div class="a" style="left:930.70px;top:99.84px;font-size:6.05px;line-height:6.05px;color:#212529;font-weight:normal;">インドネシア</div>
<div class="cb" style="left:767.2px;top:108.29px;"></div>
<div class="a" style="left:777.80px;top:109.86px;font-size:6.05px;line-height:6.05px;color:#212529;font-weight:normal;">フィリピン</div>
<div class="cb" style="left:818.4px;top:108.29px;"></div>
<div class="a" style="left:829.00px;top:109.86px;font-size:6.05px;line-height:6.05px;color:#212529;font-weight:normal;">ベトナム</div>
<div class="cb" style="left:869.1px;top:108.29px;"></div>
<div class="a" style="left:879.70px;top:109.86px;font-size:6.05px;line-height:6.05px;color:#212529;font-weight:normal;">インド</div>
<div class="cb" style="left:920.1px;top:108.29px;"></div>
<div class="a" style="left:930.70px;top:109.86px;font-size:6.05px;line-height:6.05px;color:#212529;font-weight:normal;">豪州</div>
<div class="cb" style="left:767.2px;top:118.31px;"></div>
<div class="a" style="left:777.80px;top:119.88px;font-size:6.05px;line-height:6.05px;color:#212529;font-weight:normal;">米国</div>
<div class="cb" style="left:818.4px;top:118.31px;"></div>
<div class="a" style="left:829.00px;top:119.88px;font-size:6.05px;line-height:6.05px;color:#212529;font-weight:normal;">カナダ</div>
<div class="cb" style="left:869.1px;top:118.31px;"></div>
<div class="a" style="left:879.70px;top:119.88px;font-size:6.05px;line-height:6.05px;color:#212529;font-weight:normal;">英国</div>
<div class="cb" style="left:920.1px;top:118.31px;"></div>
<div class="a" style="left:930.70px;top:119.88px;font-size:6.05px;line-height:6.05px;color:#212529;font-weight:normal;">フランス</div>
<div class="cb" style="left:767.2px;top:128.33px;"></div>
<div class="a" style="left:777.80px;top:129.90px;font-size:6.05px;line-height:6.05px;color:#212529;font-weight:normal;">ドイツ</div>
<div class="cb" style="left:818.4px;top:128.33px;"></div>
<div class="a" style="left:829.00px;top:129.90px;font-size:6.05px;line-height:6.05px;color:#212529;font-weight:normal;">イタリア</div>
<div class="cb" style="left:869.1px;top:128.33px;"></div>
<div class="a" style="left:879.70px;top:129.90px;font-size:6.05px;line-height:6.05px;color:#212529;font-weight:normal;">スペイン</div>
<div class="cb" style="left:920.1px;top:128.33px;"></div>
<div class="a" style="left:930.70px;top:129.90px;font-size:6.05px;line-height:6.05px;color:#212529;font-weight:normal;">ロシア</div>
<div class="cb" style="left:767.2px;top:138.35px;"></div>
<div class="a" style="left:777.80px;top:139.92px;font-size:6.05px;line-height:6.05px;color:#212529;font-weight:normal;">その他</div>
<div class="box" style="left:722.2px;top:210.2px;width:254.8px;height:14.4px;background:#def2e3;border:1px solid #a3d9b0;border-radius:2px;"></div>
<div class="a" style="left:812.50px;top:215.25px;font-size:6.2px;line-height:6.2px;color:#62b676;font-weight:normal;">上記の条件で集計を再実行</div>
<div class="box" style="left:6.0px;top:258.3px;width:63px;height:22.2px;border:1px solid #e4e7ea;border-bottom:none;border-radius:2px 2px 0 0;"></div>
<div class="box" style="left:68.5px;top:279.5px;width:62.5px;height:1px;background:#e4e7ea;"></div>
<div class="box" style="left:6.0px;top:280px;width:1px;height:13px;background:#f3f4f5;"></div>
<div class="a" style="left:24.30px;top:266.60px;font-size:6.9px;line-height:6.9px;color:#495057;font-weight:normal;">サマリー</div>
<div class="a" style="left:82.00px;top:265.65px;font-size:7.2px;line-height:7.2px;color:#007bff;font-weight:bold;">時間帯ごと</div>
<div class="a" style="left:8.70px;top:298.43px;font-size:6.05px;line-height:6.05px;color:#212529;font-weight:normal;">グラフ内訳</div>
<div class="box" style="left:47.4px;top:293.3px;width:83.3px;height:14.3px;border:1px solid #ced4da;border-radius:2px;background:#fff;"></div>
<div class="a" style="left:49.80px;top:298.40px;font-size:6.1px;line-height:6.1px;color:#212529;font-weight:normal;">国籍</div>
<svg width="984" height="440" viewBox="0 0 984 440"><path d="M121.6 299.4 l2.7 2.7 l2.7 -2.7" fill="none" stroke="#343a40" stroke-width="0.9"/></svg>
<div class="cb" style="left:6.1px;top:321px;width:7.6px;height:7.6px;"></div>
<div class="a" style="left:17.20px;top:323.23px;font-size:6.65px;line-height:6.65px;color:#212529;font-weight:normal;">1日あたりの平均を表示</div>
<div class="cb" style="left:6.1px;top:339.1px;width:7.6px;height:7.6px;"></div>
<div class="a" style="left:17.20px;top:341.33px;font-size:6.65px;line-height:6.65px;color:#212529;font-weight:normal;">構成比を表示</div>
<svg width="984" height="440" viewBox="0 0 984 440">
<circle cx="202.2" cy="263.6" r="3.2" fill="#800080"/>
<text x="209.29999999999998" y="265.9" font-size="6.5" fill="#555" stroke="#555" stroke-width="0.1">韓国</text>
<circle cx="263.1" cy="263.6" r="3.2" fill="#ae1fae"/>
<text x="270.20000000000005" y="265.9" font-size="6.5" fill="#555" stroke="#555" stroke-width="0.1">中国</text>
<circle cx="324" cy="263.6" r="3.2" fill="#d35bd3"/>
<text x="331.1" y="265.9" font-size="6.5" fill="#555" stroke="#555" stroke-width="0.1">台湾</text>
<circle cx="385" cy="263.6" r="3.2" fill="#e996e9"/>
<text x="392.1" y="265.9" font-size="6.5" fill="#555" stroke="#555" stroke-width="0.1">香港</text>
<circle cx="446" cy="263.6" r="3.2" fill="#700000"/>
<text x="453.1" y="265.9" font-size="6.5" fill="#555" stroke="#555" stroke-width="0.1">タイ</text>
<circle cx="202.2" cy="273.4" r="3.2" fill="#a60000"/>
<text x="209.29999999999998" y="275.7" font-size="6.5" fill="#555" stroke="#555" stroke-width="0.1">シンガポール</text>
<circle cx="263.1" cy="273.4" r="3.2" fill="#dd0000"/>
<text x="270.20000000000005" y="275.7" font-size="6.5" fill="#555" stroke="#555" stroke-width="0.1">マレーシア</text>
<circle cx="324" cy="273.4" r="3.2" fill="#ff3333"/>
<text x="331.1" y="275.7" font-size="6.5" fill="#555" stroke="#555" stroke-width="0.1">インドネシア</text>
<circle cx="385" cy="273.4" r="3.2" fill="#ff7777"/>
<text x="392.1" y="275.7" font-size="6.5" fill="#555" stroke="#555" stroke-width="0.1">フィリピン</text>
<circle cx="446" cy="273.4" r="3.2" fill="#ffb0b0"/>
<text x="453.1" y="275.7" font-size="6.5" fill="#555" stroke="#555" stroke-width="0.1">ベトナム</text>
<circle cx="202.2" cy="283.2" r="3.2" fill="#ee8800"/>
<text x="209.29999999999998" y="285.5" font-size="6.5" fill="#555" stroke="#555" stroke-width="0.1">インド</text>
<circle cx="263.1" cy="283.2" r="3.2" fill="#c8c83c"/>
<text x="270.20000000000005" y="285.5" font-size="6.5" fill="#555" stroke="#555" stroke-width="0.1">豪州</text>
<circle cx="324" cy="283.2" r="3.2" fill="#007575"/>
<text x="331.1" y="285.5" font-size="6.5" fill="#555" stroke="#555" stroke-width="0.1">米国</text>
<circle cx="385" cy="283.2" r="3.2" fill="#2ab3b0"/>
<text x="392.1" y="285.5" font-size="6.5" fill="#555" stroke="#555" stroke-width="0.1">カナダ</text>
<circle cx="446" cy="283.2" r="3.2" fill="#0000a8"/>
<text x="453.1" y="285.5" font-size="6.5" fill="#555" stroke="#555" stroke-width="0.1">英国</text>
<circle cx="202.2" cy="293.0" r="3.2" fill="#0a0aff"/>
<text x="209.29999999999998" y="295.3" font-size="6.5" fill="#555" stroke="#555" stroke-width="0.1">フランス</text>
<circle cx="263.1" cy="293.0" r="3.2" fill="#4f4fff"/>
<text x="270.20000000000005" y="295.3" font-size="6.5" fill="#555" stroke="#555" stroke-width="0.1">ドイツ</text>
<circle cx="324" cy="293.0" r="3.2" fill="#7878ff"/>
<text x="331.1" y="295.3" font-size="6.5" fill="#555" stroke="#555" stroke-width="0.1">イタリア</text>
<circle cx="385" cy="293.0" r="3.2" fill="#9999ff"/>
<text x="392.1" y="295.3" font-size="6.5" fill="#555" stroke="#555" stroke-width="0.1">スペイン</text>
<circle cx="446" cy="293.0" r="3.2" fill="#bdbdfb"/>
<text x="453.1" y="295.3" font-size="6.5" fill="#555" stroke="#555" stroke-width="0.1">ロシア</text>
<circle cx="202.2" cy="302.8" r="3.2" fill="#aaaaaa"/>
<text x="209.29999999999998" y="305.1" font-size="6.5" fill="#555" stroke="#555" stroke-width="0.1">その他</text>
<line x1="171.30" y1="317" x2="171.30" y2="394.5" stroke="#c9ccd1" stroke-width="1"/>
<text x="171.30" y="407.9" font-size="5.5" fill="#222" stroke="#222" stroke-width="0.12" text-anchor="middle">0</text>
<line x1="201.23" y1="317" x2="201.23" y2="394.5" stroke="#ececec" stroke-width="0.8"/>
<text x="201.23" y="407.9" font-size="5.5" fill="#222" stroke="#222" stroke-width="0.12" text-anchor="middle">300,000</text>
<line x1="231.16" y1="317" x2="231.16" y2="394.5" stroke="#ececec" stroke-width="0.8"/>
<text x="231.16" y="407.9" font-size="5.5" fill="#222" stroke="#222" stroke-width="0.12" text-anchor="middle">600,000</text>
<line x1="261.09" y1="317" x2="261.09" y2="394.5" stroke="#ececec" stroke-width="0.8"/>
<text x="261.09" y="407.9" font-size="5.5" fill="#222" stroke="#222" stroke-width="0.12" text-anchor="middle">900,000</text>
<line x1="291.02" y1="317" x2="291.02" y2="394.5" stroke="#ececec" stroke-width="0.8"/>
<text x="291.02" y="407.9" font-size="5.5" fill="#222" stroke="#222" stroke-width="0.12" text-anchor="middle">1,200,000</text>
<line x1="320.95" y1="317" x2="320.95" y2="394.5" stroke="#ececec" stroke-width="0.8"/>
<text x="320.95" y="407.9" font-size="5.5" fill="#222" stroke="#222" stroke-width="0.12" text-anchor="middle">1,500,000</text>
<line x1="350.88" y1="317" x2="350.88" y2="394.5" stroke="#ececec" stroke-width="0.8"/>
<text x="350.88" y="407.9" font-size="5.5" fill="#222" stroke="#222" stroke-width="0.12" text-anchor="middle">1,800,000</text>
<line x1="380.81" y1="317" x2="380.81" y2="394.5" stroke="#ececec" stroke-width="0.8"/>
<text x="380.81" y="407.9" font-size="5.5" fill="#222" stroke="#222" stroke-width="0.12" text-anchor="middle">2,100,000</text>
<line x1="410.74" y1="317" x2="410.74" y2="394.5" stroke="#ececec" stroke-width="0.8"/>
<text x="410.74" y="407.9" font-size="5.5" fill="#222" stroke="#222" stroke-width="0.12" text-anchor="middle">2,400,000</text>
<line x1="440.67" y1="317" x2="440.67" y2="394.5" stroke="#ececec" stroke-width="0.8"/>
<text x="440.67" y="407.9" font-size="5.5" fill="#222" stroke="#222" stroke-width="0.12" text-anchor="middle">2,700,000</text>
<line x1="470.60" y1="317" x2="470.60" y2="394.5" stroke="#ececec" stroke-width="0.8"/>
<text x="470.60" y="407.9" font-size="5.5" fill="#222" stroke="#222" stroke-width="0.12" text-anchor="middle">3,000,000</text>
<rect x="171.30" y="322.8" width="28.60" height="12.80" fill="#800080"/>
<rect x="199.90" y="322.8" width="49.20" height="12.80" fill="#ae1fae"/>
<rect x="249.10" y="322.8" width="25.90" height="12.80" fill="#d35bd3"/>
<rect x="275.00" y="322.8" width="9.90" height="12.80" fill="#e996e9"/>
<rect x="284.90" y="322.8" width="2.90" height="12.80" fill="#700000"/>
<rect x="287.80" y="322.8" width="1.70" height="12.80" fill="#a60000"/>
<rect x="289.50" y="322.8" width="2.60" height="12.80" fill="#dd0000"/>
<rect x="292.10" y="322.8" width="2.10" height="12.80" fill="#ff3333"/>
<rect x="294.20" y="322.8" width="1.70" height="12.80" fill="#ff7777"/>
<rect x="295.90" y="322.8" width="1.00" height="12.80" fill="#ffb0b0"/>
<rect x="296.90" y="322.8" width="1.20" height="12.80" fill="#ee8800"/>
<rect x="298.10" y="322.8" width="12.70" height="12.80" fill="#c8c83c"/>
<rect x="310.80" y="322.8" width="25.00" height="12.80" fill="#007575"/>
<rect x="335.80" y="322.8" width="8.10" height="12.80" fill="#2ab3b0"/>
<rect x="343.90" y="322.8" width="6.10" height="12.80" fill="#0000a8"/>
<rect x="350.00" y="322.8" width="5.70" height="12.80" fill="#0a0aff"/>
<rect x="355.70" y="322.8" width="11.20" height="12.80" fill="#4f4fff"/>
<rect x="366.90" y="322.8" width="11.10" height="12.80" fill="#7878ff"/>
<rect x="378.00" y="322.8" width="7.40" height="12.80" fill="#9999ff"/>
<rect x="385.40" y="322.8" width="3.50" height="12.80" fill="#bdbdfb"/>
<rect x="388.90" y="322.8" width="30.40" height="12.80" fill="#aaaaaa"/>
<text x="164" y="331.6" font-size="6.6" font-weight="bold" fill="#222" text-anchor="end">期間全体</text>
<rect x="171.30" y="349.3" width="15.80" height="12.60" fill="#800080"/>
<rect x="187.10" y="349.3" width="31.10" height="12.60" fill="#ae1fae"/>
<rect x="218.20" y="349.3" width="16.80" height="12.60" fill="#d35bd3"/>
<rect x="235.00" y="349.3" width="7.20" height="12.60" fill="#e996e9"/>
<rect x="242.20" y="349.3" width="1.90" height="12.60" fill="#700000"/>
<rect x="244.10" y="349.3" width="0.90" height="12.60" fill="#a60000"/>
<rect x="245.00" y="349.3" width="1.20" height="12.60" fill="#dd0000"/>
<rect x="246.20" y="349.3" width="1.70" height="12.60" fill="#ff3333"/>
<rect x="247.90" y="349.3" width="0.90" height="12.60" fill="#ff7777"/>
<rect x="248.80" y="349.3" width="0.50" height="12.60" fill="#ffb0b0"/>
<rect x="249.30" y="349.3" width="0.70" height="12.60" fill="#ee8800"/>
<rect x="250.00" y="349.3" width="7.90" height="12.60" fill="#c8c83c"/>
<rect x="257.90" y="349.3" width="16.30" height="12.60" fill="#007575"/>
<rect x="274.20" y="349.3" width="4.80" height="12.60" fill="#2ab3b0"/>
<rect x="279.00" y="349.3" width="4.10" height="12.60" fill="#0000a8"/>
<rect x="283.10" y="349.3" width="3.30" height="12.60" fill="#0a0aff"/>
<rect x="286.40" y="349.3" width="7.40" height="12.60" fill="#4f4fff"/>
<rect x="293.80" y="349.3" width="7.30" height="12.60" fill="#7878ff"/>
<rect x="301.10" y="349.3" width="5.20" height="12.60" fill="#9999ff"/>
<rect x="306.30" y="349.3" width="2.20" height="12.60" fill="#bdbdfb"/>
<rect x="308.50" y="349.3" width="19.00" height="12.60" fill="#aaaaaa"/>
<text x="164" y="358.0" font-size="6.6" font-weight="bold" fill="#222" text-anchor="end">平日</text>
<rect x="171.30" y="375.3" width="11.70" height="12.60" fill="#800080"/>
<rect x="183.00" y="375.3" width="19.00" height="12.60" fill="#ae1fae"/>
<rect x="202.00" y="375.3" width="9.30" height="12.60" fill="#d35bd3"/>
<rect x="211.30" y="375.3" width="2.60" height="12.60" fill="#e996e9"/>
<rect x="213.90" y="375.3" width="1.20" height="12.60" fill="#700000"/>
<rect x="215.10" y="375.3" width="0.60" height="12.60" fill="#a60000"/>
<rect x="215.70" y="375.3" width="1.10" height="12.60" fill="#dd0000"/>
<rect x="216.80" y="375.3" width="0.80" height="12.60" fill="#ff3333"/>
<rect x="217.60" y="375.3" width="0.70" height="12.60" fill="#ff7777"/>
<rect x="218.30" y="375.3" width="0.40" height="12.60" fill="#ffb0b0"/>
<rect x="218.70" y="375.3" width="0.40" height="12.60" fill="#ee8800"/>
<rect x="219.10" y="375.3" width="4.30" height="12.60" fill="#c8c83c"/>
<rect x="223.40" y="375.3" width="8.60" height="12.60" fill="#007575"/>
<rect x="232.00" y="375.3" width="3.80" height="12.60" fill="#2ab3b0"/>
<rect x="235.80" y="375.3" width="2.60" height="12.60" fill="#0000a8"/>
<rect x="238.40" y="375.3" width="2.20" height="12.60" fill="#0a0aff"/>
<rect x="240.60" y="375.3" width="3.50" height="12.60" fill="#4f4fff"/>
<rect x="244.10" y="375.3" width="2.90" height="12.60" fill="#7878ff"/>
<rect x="247.00" y="375.3" width="2.20" height="12.60" fill="#9999ff"/>
<rect x="249.20" y="375.3" width="1.60" height="12.60" fill="#bdbdfb"/>
<rect x="250.80" y="375.3" width="10.90" height="12.60" fill="#aaaaaa"/>
<text x="164" y="384.0" font-size="6.6" font-weight="bold" fill="#222" text-anchor="end">祝休日</text>
</svg>
</body></html>
